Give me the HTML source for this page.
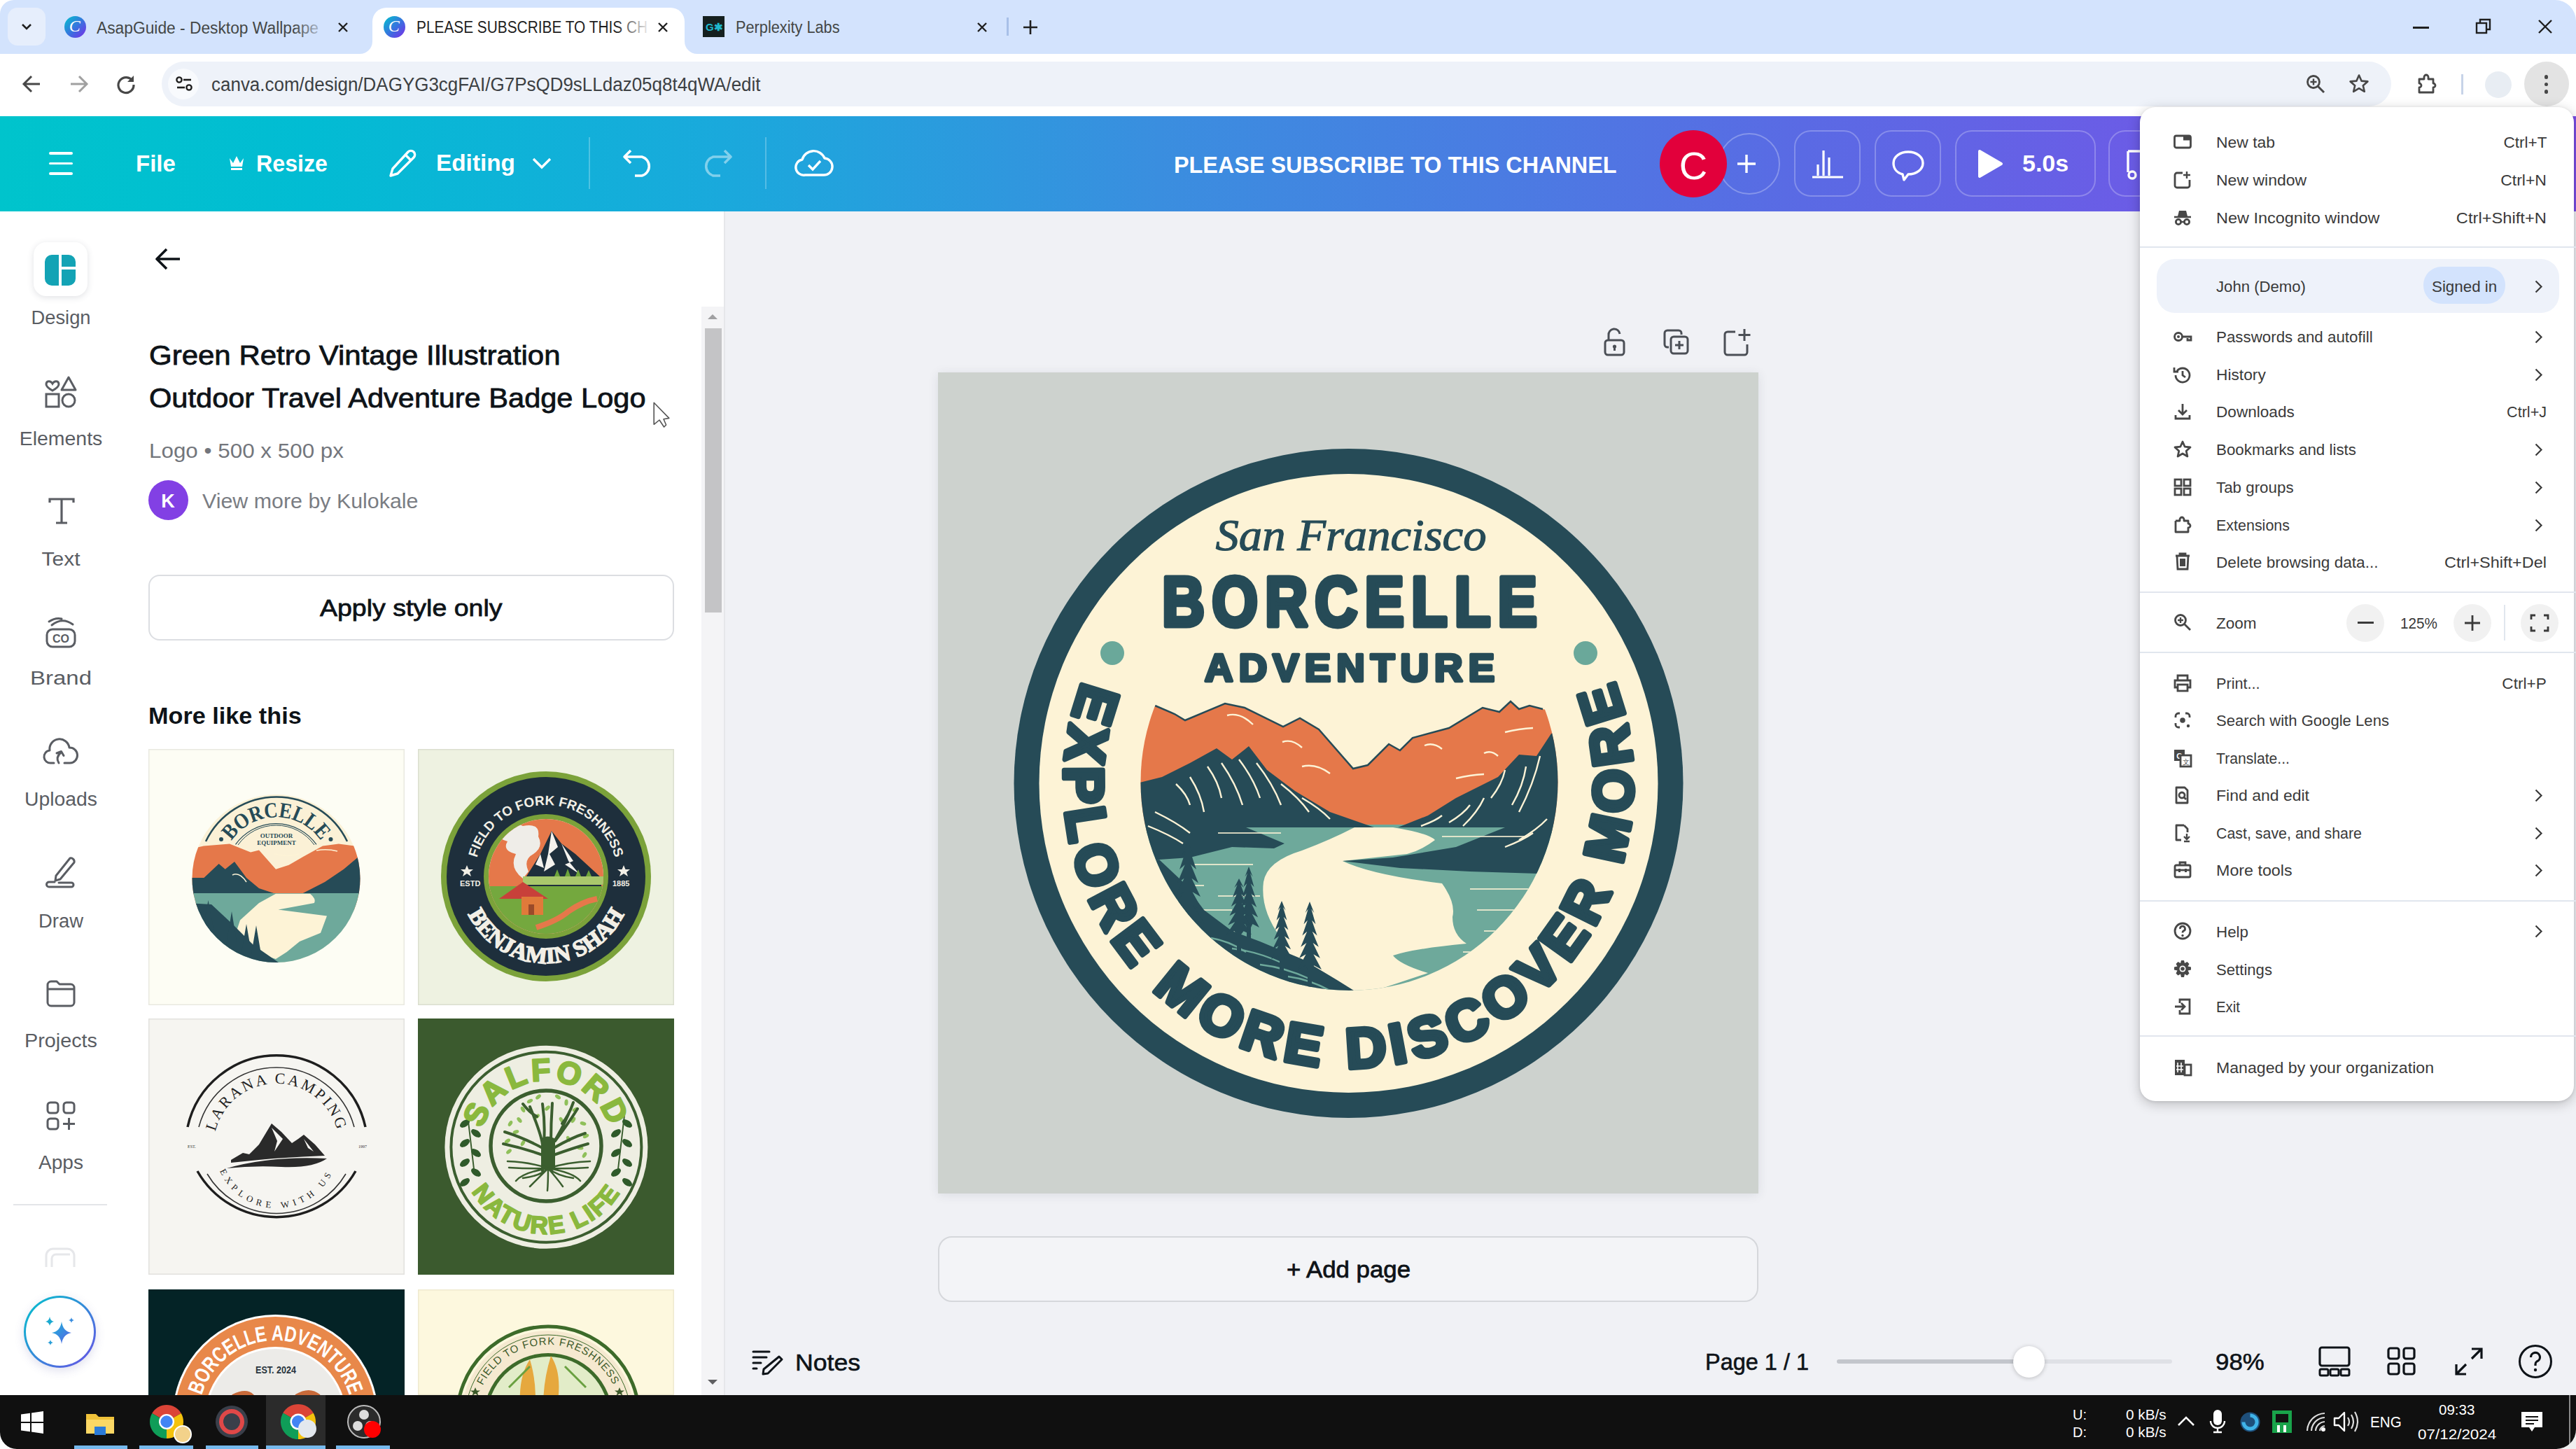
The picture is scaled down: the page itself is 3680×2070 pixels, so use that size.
<!DOCTYPE html>
<html><head><meta charset="utf-8"><style>
html,body{margin:0;padding:0;}
body{width:3680px;height:2070px;position:relative;overflow:hidden;background:#fff;font-family:'Liberation Sans', sans-serif;}
svg{overflow:visible}
</style></head><body>
<div style="position:absolute;left:0px;top:0px;width:3680px;height:77px;background:#d3e3fd;"></div>
<div style="position:absolute;left:11px;top:11px;width:54px;height:54px;background:#e6eefc;border-radius:14px;"></div>
<svg style="position:absolute;left:26px;top:26px;" width="24" height="24" viewBox="0 0 24 24"><path d="M6 9 L12 15 L18 9" fill="none" stroke="#1f1f1f" stroke-width="2.6"/></svg>
<div style="position:absolute;left:532px;top:11px;width:446px;height:66px;background:#fff;border-radius:20px 20px 0 0;"></div>
<svg style="position:absolute;left:514px;top:59px" width="18" height="18"><path d="M0 18 A18 18 0 0 0 18 0 L18 18Z" fill="#fff"/></svg>
<svg style="position:absolute;left:978px;top:59px" width="18" height="18"><path d="M18 18 A18 18 0 0 1 0 0 L0 18Z" fill="#fff"/></svg>
<svg style="position:absolute;left:92.0px;top:23.0px;" width="31.0" height="31.0" viewBox="0 0 31.0 31.0"><defs><linearGradient id="cg107" x1="0" y1="0" x2="1" y2="1"><stop offset="0" stop-color="#00c4cc"/><stop offset="0.55" stop-color="#3b6fe0"/><stop offset="1" stop-color="#7d2ae8"/></linearGradient></defs><circle cx="15.5" cy="15.5" r="15.5" fill="url(#cg107)"/><text x="14.725" y="22.474999999999998" text-anchor="middle" font-family="Liberation Serif" font-style="italic" font-size="24.025000000000002" fill="#fff">C</text></svg>
<div style="position:absolute;left:138.0px;top:39.5px;line-height:0;white-space:pre;font-family:'Liberation Sans', sans-serif;font-size:23px;font-weight:400;font-style:normal;color:#444746;letter-spacing:0px;transform:scaleX(0.9905);transform-origin:left 0;">AsapGuide - Desktop Wallpape</div>
<div style="position:absolute;left:420px;top:20px;width:50px;height:40px;background:linear-gradient(90deg,rgba(211,227,253,0),#d3e3fd);"></div>
<svg style="position:absolute;left:482px;top:31px;" width="16" height="16" viewBox="0 0 16 16"><path d="M2 2L14 14M14 2L2 14" stroke="#1f1f1f" stroke-width="2.4"/></svg>
<svg style="position:absolute;left:547.8px;top:23.0px;" width="31.0" height="31.0" viewBox="0 0 31.0 31.0"><defs><linearGradient id="cg563" x1="0" y1="0" x2="1" y2="1"><stop offset="0" stop-color="#00c4cc"/><stop offset="0.55" stop-color="#3b6fe0"/><stop offset="1" stop-color="#7d2ae8"/></linearGradient></defs><circle cx="15.5" cy="15.5" r="15.5" fill="url(#cg563)"/><text x="14.725" y="22.474999999999998" text-anchor="middle" font-family="Liberation Serif" font-style="italic" font-size="24.025000000000002" fill="#fff">C</text></svg>
<div style="position:absolute;left:595.0px;top:39.4px;line-height:0;white-space:pre;font-family:'Liberation Sans', sans-serif;font-size:23px;font-weight:400;font-style:normal;color:#1f1f1f;letter-spacing:0px;transform:scaleX(0.9059);transform-origin:left 0;">PLEASE SUBSCRIBE TO THIS CH</div>
<div style="position:absolute;left:880px;top:20px;width:50px;height:40px;background:linear-gradient(90deg,rgba(255,255,255,0),#fff);"></div>
<svg style="position:absolute;left:938.5px;top:31px;" width="16" height="16" viewBox="0 0 16 16"><path d="M2 2L14 14M14 2L2 14" stroke="#1f1f1f" stroke-width="2.4"/></svg>
<div style="position:absolute;left:1004px;top:23px;width:31px;height:30px;background:#15201f;"></div>
<div style="position:absolute;left:1008.0px;top:38.8px;line-height:0;white-space:pre;font-family:'Liberation Sans', sans-serif;font-size:15px;font-weight:700;font-style:normal;color:#1fb8cd;letter-spacing:0px;">G✱</div>
<div style="position:absolute;left:1051.0px;top:39.4px;line-height:0;white-space:pre;font-family:'Liberation Sans', sans-serif;font-size:23px;font-weight:400;font-style:normal;color:#444746;letter-spacing:0px;transform:scaleX(0.9444);transform-origin:left 0;">Perplexity Labs</div>
<svg style="position:absolute;left:1394.5px;top:31px;" width="16" height="16" viewBox="0 0 16 16"><path d="M2 2L14 14M14 2L2 14" stroke="#1f1f1f" stroke-width="2.4"/></svg>
<div style="position:absolute;left:1438px;top:25px;width:3px;height:26px;background:#a8c0e8;"></div>
<svg style="position:absolute;left:1461px;top:28px;" width="22" height="22" viewBox="0 0 22 22"><path d="M11 1V21M1 11H21" stroke="#1f1f1f" stroke-width="2.6"/></svg>
<div style="position:absolute;left:3447px;top:38px;width:23px;height:2.5px;background:#1f1f1f;"></div>
<svg style="position:absolute;left:3536px;top:26px;" width="24" height="24" viewBox="0 0 24 24"><rect x="2" y="7" width="14" height="14" fill="none" stroke="#1f1f1f" stroke-width="2.4"/><path d="M7 7V2H21V16H16" fill="none" stroke="#1f1f1f" stroke-width="2.4"/></svg>
<svg style="position:absolute;left:3626px;top:28px;" width="20" height="20" viewBox="0 0 20 20"><path d="M1 1L19 19M19 1L1 19" stroke="#1f1f1f" stroke-width="2.4"/></svg>
<div style="position:absolute;left:0px;top:77px;width:3680px;height:89px;background:#fff;"></div>
<svg style="position:absolute;left:31px;top:106px;" width="28" height="28" viewBox="0 0 28 28"><path d="M26 14H4M14 3L3 14L14 25" fill="none" stroke="#474747" stroke-width="3"/></svg>
<svg style="position:absolute;left:99px;top:106px;" width="28" height="28" viewBox="0 0 28 28"><path d="M2 14H24M14 3L25 14L14 25" fill="none" stroke="#a0a0a0" stroke-width="3"/></svg>
<svg style="position:absolute;left:166px;top:106px;" width="28" height="28" viewBox="0 0 28 28"><path d="M23.5 10 A11 11 0 1 0 25 15" fill="none" stroke="#474747" stroke-width="3.2"/><path d="M25 2V11H16Z" fill="#474747"/></svg>
<div style="position:absolute;left:231px;top:88px;width:3185px;height:64px;background:#eef2f9;border-radius:32px;"></div>
<div style="position:absolute;left:240px;top:98px;width:44px;height:44px;border-radius:22px;background:#f8fafd;"></div>
<svg style="position:absolute;left:251px;top:109px;" width="24" height="22" viewBox="0 0 24 22"><circle cx="5" cy="5" r="3.6" fill="none" stroke="#1f1f1f" stroke-width="2.4"/><path d="M11 5H22" stroke="#1f1f1f" stroke-width="2.6"/><path d="M2 16H13" stroke="#1f1f1f" stroke-width="2.6"/><circle cx="19" cy="16" r="3.6" fill="none" stroke="#1f1f1f" stroke-width="2.4"/></svg>
<div style="position:absolute;left:301.5px;top:120.6px;line-height:0;white-space:pre;font-family:'Liberation Sans', sans-serif;font-size:27px;font-weight:400;font-style:normal;color:#3c4043;letter-spacing:0px;transform:scaleX(0.9621);transform-origin:left 0;">canva.com/design/DAGYG3cgFAI/G7PsQD9sLLdaz05q8t4qWA/edit</div>
<svg style="position:absolute;left:3294px;top:106px;" width="28" height="28" viewBox="0 0 28 28"><circle cx="11" cy="11" r="8.5" fill="none" stroke="#474747" stroke-width="2.8"/><path d="M17 17L26 26" stroke="#474747" stroke-width="3"/><path d="M11 6.5V15.5M6.5 11H15.5" stroke="#474747" stroke-width="2.4"/></svg>
<svg style="position:absolute;left:3355px;top:105px;" width="30" height="30" viewBox="0 0 30 30"><path d="M15 2.5L18.6 10.6L27.4 11.4L20.8 17.2L22.8 25.8L15 21.2L7.2 25.8L9.2 17.2L2.6 11.4L11.4 10.6Z" fill="none" stroke="#474747" stroke-width="2.6" stroke-linejoin="round"/></svg>
<svg style="position:absolute;left:3452px;top:104px;" width="32" height="32" viewBox="0 0 32 32"><path d="M4 9H11V6A3 3 0 0 1 17 6V9H24V15A3 3 0 0 1 24 21V28H4V21A3 3 0 0 0 4 15Z" fill="none" stroke="#474747" stroke-width="2.8" stroke-linejoin="round"/></svg>
<div style="position:absolute;left:3516px;top:106px;width:3px;height:29px;background:#c7d3e8;"></div>
<div style="position:absolute;left:3550px;top:102px;width:38px;height:38px;border-radius:19px;background:#e8edf3;"></div>
<div style="position:absolute;left:3605.5px;top:88px;width:64px;height:64px;border-radius:32px;background:#e3e3e3;"></div>
<div style="position:absolute;left:3634.7px;top:107.2px;width:5.6px;height:5.6px;border-radius:3px;background:#474747;"></div>
<div style="position:absolute;left:3634.7px;top:117.7px;width:5.6px;height:5.6px;border-radius:3px;background:#474747;"></div>
<div style="position:absolute;left:3634.7px;top:128.2px;width:5.6px;height:5.6px;border-radius:3px;background:#474747;"></div>
<div style="position:absolute;left:0px;top:166px;width:3680px;height:136px;background:linear-gradient(90deg,#00c4cc 0%,#02bcd3 12%,#1aa9dc 28%,#3a8edf 45%,#4a7ce2 58%,#5a6ae4 70%,#6b5ce6 83%,#7a4fe8 100%);"></div>
<div style="position:absolute;left:69.5px;top:217.2px;width:34.0px;height:3.6000000000000227px;background:#fff;border-radius:2px;"></div>
<div style="position:absolute;left:69.5px;top:231.7px;width:34.0px;height:3.6000000000000227px;background:#fff;border-radius:2px;"></div>
<div style="position:absolute;left:69.5px;top:246.2px;width:34.0px;height:3.6000000000000227px;background:#fff;border-radius:2px;"></div>
<div style="position:absolute;left:194.0px;top:233.6px;line-height:0;white-space:pre;font-family:'Liberation Sans', sans-serif;font-size:33px;font-weight:700;font-style:normal;color:#fff;letter-spacing:0px;">File</div>
<svg style="position:absolute;left:326px;top:220px;" width="24" height="24" viewBox="0 0 24 24"><path d="M2 6L7 13L12 3L17 13L22 6L20 18H4Z" fill="#fff"/><rect x="4" y="20" width="16" height="3" fill="#fff"/></svg>
<div style="position:absolute;left:365.7px;top:233.6px;line-height:0;white-space:pre;font-family:'Liberation Sans', sans-serif;font-size:33px;font-weight:700;font-style:normal;color:#fff;letter-spacing:0px;transform:scaleX(0.9755);transform-origin:left 0;">Resize</div>
<svg style="position:absolute;left:553px;top:211px;" width="44" height="44" viewBox="0 0 44 44"><path d="M30 6A5.5 5.5 0 0 1 38 14L15 37L5 40L8 30Z M26 10L34 18" fill="none" stroke="#fff" stroke-width="3.4" stroke-linejoin="round" stroke-linecap="round"/></svg>
<div style="position:absolute;left:623.0px;top:233.1px;line-height:0;white-space:pre;font-family:'Liberation Sans', sans-serif;font-size:33px;font-weight:700;font-style:normal;color:#fff;letter-spacing:0px;transform:scaleX(1.0106);transform-origin:left 0;">Editing</div>
<svg style="position:absolute;left:760px;top:224px;" width="28" height="18" viewBox="0 0 28 18"><path d="M2 3L14 15L26 3" fill="none" stroke="#fff" stroke-width="3.4"/></svg>
<div style="position:absolute;left:841px;top:196px;width:2px;height:74px;background:rgba(255,255,255,0.25);"></div>
<svg style="position:absolute;left:889px;top:213px;" width="46" height="40" viewBox="0 0 46 40"><path d="M12 2L3 11L12 20M3 11H28A14 14 0 0 1 28 38H18" fill="none" stroke="#fff" stroke-width="3.6" stroke-linejoin="round"/></svg>
<svg style="position:absolute;left:1001px;top:213px;" width="46" height="40" viewBox="0 0 46 40"><path d="M34 2L43 11L34 20M43 11H18A14 14 0 0 0 18 38H28" fill="none" stroke="rgba(255,255,255,0.45)" stroke-width="3.6" stroke-linejoin="round"/></svg>
<div style="position:absolute;left:1092.5px;top:196px;width:2.0px;height:74px;background:rgba(255,255,255,0.25);"></div>
<svg style="position:absolute;left:1136px;top:212px;" width="54" height="42" viewBox="0 0 54 42"><path d="M14 38H40A12 12 0 0 0 42 14A17 17 0 0 0 10 16A11 11 0 0 0 14 38Z" fill="none" stroke="#fff" stroke-width="3.4" stroke-linejoin="round"/><path d="M19 24L25 30L36 18" fill="none" stroke="#fff" stroke-width="3.4"/></svg>
<div style="position:absolute;left:1676.6px;top:235.2px;line-height:0;white-space:pre;font-family:'Liberation Sans', sans-serif;font-size:34px;font-weight:700;font-style:normal;color:#fff;letter-spacing:0px;transform:scaleX(0.9521);transform-origin:left 0;">PLEASE SUBSCRIBE TO THIS CHANNEL</div>
<div style="position:absolute;left:2455px;top:189.5px;width:88px;height:88px;border-radius:50%;box-sizing:border-box;border:2px solid rgba(255,255,255,0.28);"></div>
<div style="position:absolute;left:2371px;top:185.5px;width:96px;height:96px;border-radius:50%;background:#e2003b;"></div>
<div style="position:absolute;left:2419.0px;top:236.6px;line-height:0;white-space:pre;font-family:'Liberation Sans', sans-serif;font-size:56px;font-weight:400;font-style:normal;color:#fff;letter-spacing:0px;transform:translateX(-50%) scaleX(1.0000);transform-origin:center 0;">C</div>
<svg style="position:absolute;left:2481px;top:219.5px;" width="28" height="28" viewBox="0 0 28 28"><path d="M14 1V27M1 14H27" stroke="#fff" stroke-width="3.4"/></svg>
<div style="position:absolute;left:2563px;top:186px;width:95px;height:95px;border-radius:24px;box-sizing:border-box;border:2px solid rgba(255,255,255,0.25);"></div>
<div style="position:absolute;left:2678px;top:186px;width:95px;height:95px;border-radius:24px;box-sizing:border-box;border:2px solid rgba(255,255,255,0.25);"></div>
<div style="position:absolute;left:2793px;top:186px;width:201px;height:95px;border-radius:24px;box-sizing:border-box;border:2px solid rgba(255,255,255,0.25);"></div>
<div style="position:absolute;left:3012px;top:186px;width:98px;height:95px;border-radius:24px;box-sizing:border-box;border:2px solid rgba(255,255,255,0.25);"></div>
<svg style="position:absolute;left:2586px;top:212px;" width="50" height="44" viewBox="0 0 50 44"><path d="M3 41H47M11 39V23M19 39V3M27 39V13" fill="none" stroke="#fff" stroke-width="3.2"/></svg>
<svg style="position:absolute;left:2701px;top:213px;" width="50" height="46" viewBox="0 0 50 46"><path d="M25 4C37 4 46 11 46 20C46 29 37 36 25 36L19 44L17 36C9 34 4 28 4 20C4 11 13 4 25 4Z" fill="none" stroke="#fff" stroke-width="3.4" stroke-linejoin="round"/></svg>
<svg style="position:absolute;left:2824px;top:213px;" width="38" height="42" viewBox="0 0 38 42"><path d="M4 3L35 21L4 39Z" fill="#fff" stroke="#fff" stroke-width="4" stroke-linejoin="round"/></svg>
<div style="position:absolute;left:2889.0px;top:232.7px;line-height:0;white-space:pre;font-family:'Liberation Sans', sans-serif;font-size:34px;font-weight:700;font-style:normal;color:#fff;letter-spacing:0px;">5.0s</div>
<svg style="position:absolute;left:3036px;top:212px;" width="40" height="46" viewBox="0 0 40 46"><path d="M4 4H24V38M4 4V34" fill="none" stroke="#fff" stroke-width="3.4"/><circle cx="10" cy="38" r="5" fill="none" stroke="#fff" stroke-width="3.4"/></svg>
<div style="position:absolute;left:0px;top:302px;width:1034px;height:1691px;background:#fff;"></div>
<div style="position:absolute;left:47.5px;top:346px;width:77px;height:77px;border-radius:18px;background:#fff;box-shadow:0 2px 10px rgba(60,70,90,0.16);"></div>
<svg style="position:absolute;left:64px;top:364px;" width="44" height="44" viewBox="0 0 44 44"><path d="M10 0H20V44H10A10 10 0 0 1 0 34V10A10 10 0 0 1 10 0Z" fill="#13a3b5"/><path d="M24 0H34A10 10 0 0 1 44 10V17H24Z" fill="#13a3b5"/><path d="M24 21H44V34A10 10 0 0 1 34 44H24Z" fill="#13a3b5"/></svg>
<div style="position:absolute;left:86.5px;top:454.1px;line-height:0;white-space:pre;font-family:'Liberation Sans', sans-serif;font-size:27px;font-weight:400;font-style:normal;color:#5a5d63;letter-spacing:0px;transform:translateX(-50%) scaleX(1.0113);transform-origin:center 0;">Design</div>
<div style="position:absolute;left:86.5px;top:626.6px;line-height:0;white-space:pre;font-family:'Liberation Sans', sans-serif;font-size:27px;font-weight:400;font-style:normal;color:#5a5d63;letter-spacing:0px;transform:translateX(-50%) scaleX(1.0536);transform-origin:center 0;">Elements</div>
<div style="position:absolute;left:86.5px;top:798.9px;line-height:0;white-space:pre;font-family:'Liberation Sans', sans-serif;font-size:27px;font-weight:400;font-style:normal;color:#5a5d63;letter-spacing:0px;transform:translateX(-50%) scaleX(1.1104);transform-origin:center 0;">Text</div>
<div style="position:absolute;left:86.5px;top:969.4px;line-height:0;white-space:pre;font-family:'Liberation Sans', sans-serif;font-size:27px;font-weight:400;font-style:normal;color:#5a5d63;letter-spacing:0px;transform:translateX(-50%) scaleX(1.2212);transform-origin:center 0;">Brand</div>
<div style="position:absolute;left:86.5px;top:1142.2px;line-height:0;white-space:pre;font-family:'Liberation Sans', sans-serif;font-size:27px;font-weight:400;font-style:normal;color:#5a5d63;letter-spacing:0px;transform:translateX(-50%) scaleX(1.0498);transform-origin:center 0;">Uploads</div>
<div style="position:absolute;left:86.5px;top:1315.6px;line-height:0;white-space:pre;font-family:'Liberation Sans', sans-serif;font-size:27px;font-weight:400;font-style:normal;color:#5a5d63;letter-spacing:0px;transform:translateX(-50%) scaleX(1.0156);transform-origin:center 0;">Draw</div>
<div style="position:absolute;left:86.5px;top:1487.1px;line-height:0;white-space:pre;font-family:'Liberation Sans', sans-serif;font-size:27px;font-weight:400;font-style:normal;color:#5a5d63;letter-spacing:0px;transform:translateX(-50%) scaleX(1.0662);transform-origin:center 0;">Projects</div>
<div style="position:absolute;left:86.5px;top:1660.5px;line-height:0;white-space:pre;font-family:'Liberation Sans', sans-serif;font-size:27px;font-weight:400;font-style:normal;color:#5a5d63;letter-spacing:0px;transform:translateX(-50%) scaleX(1.0399);transform-origin:center 0;">Apps</div>
<svg style="position:absolute;left:64px;top:537px;" width="46" height="46" viewBox="0 0 46 46"><path d="M11 11 C8 6 2 7 2 12 C2 16 11 21 11 21 C11 21 20 16 20 12 C20 7 14 6 11 11Z" fill="none" stroke="#5a5d63" stroke-width="3"/><path d="M34 2L44 20H24Z" fill="none" stroke="#5a5d63" stroke-width="3" stroke-linejoin="round"/><rect x="2" y="26" width="18" height="18" fill="none" stroke="#5a5d63" stroke-width="3"/><circle cx="34" cy="35" r="9" fill="none" stroke="#5a5d63" stroke-width="3"/></svg>
<svg style="position:absolute;left:68px;top:710px;" width="40" height="40" viewBox="0 0 40 40"><path d="M3 8V3H37V8M20 3V37M12 37H28" fill="none" stroke="#5a5d63" stroke-width="3.2"/></svg>
<svg style="position:absolute;left:64px;top:880px;" width="46" height="46" viewBox="0 0 46 46"><rect x="3" y="19" width="40" height="25" rx="8" fill="none" stroke="#5a5d63" stroke-width="3"/><path d="M10 13Q25 1 40 12M6 8Q15 2 24 4" fill="none" stroke="#5a5d63" stroke-width="3" stroke-linecap="round"/><text x="23" y="38" text-anchor="middle" font-family="Liberation Sans" font-weight="700" font-size="16" fill="#5a5d63">CO</text></svg>
<svg style="position:absolute;left:62px;top:1052px;" width="50" height="42" viewBox="0 0 50 42"><path d="M15 38H11A9 9 0 0 1 9 20A14 14 0 0 1 37 16A10.5 10.5 0 0 1 38 38H30" fill="none" stroke="#5a5d63" stroke-width="3" stroke-linecap="round" stroke-linejoin="round"/><path d="M22 38Q17 30 25 23M19 24L25.5 21.5L29 27.5" fill="none" stroke="#5a5d63" stroke-width="3" stroke-linecap="round" stroke-linejoin="round"/></svg>
<svg style="position:absolute;left:64px;top:1223px;" width="46" height="46" viewBox="0 0 46 46"><path d="M36 3A5 5 0 0 1 42 9L22 33L15 35L16 28Z" fill="none" stroke="#5a5d63" stroke-width="3" stroke-linejoin="round"/><path d="M16 34H5A3.5 3.5 0 0 0 5 41H40A3.5 3.5 0 0 1 40 48" fill="none" stroke="#5a5d63" stroke-width="0"/><path d="M14 37H6A3.5 3.5 0 0 0 6 44H38A3 3 0 0 0 38 38H20" fill="none" stroke="#5a5d63" stroke-width="3" stroke-linecap="round"/></svg>
<svg style="position:absolute;left:65px;top:1398px;" width="44" height="42" viewBox="0 0 44 42"><path d="M3 9A5 5 0 0 1 8 4H16L20 8H36A5 5 0 0 1 41 13V34A5 5 0 0 1 36 39H8A5 5 0 0 1 3 34Z M3 15H41" fill="none" stroke="#5a5d63" stroke-width="3" stroke-linejoin="round"/></svg>
<svg style="position:absolute;left:65px;top:1572px;" width="44" height="44" viewBox="0 0 44 44"><rect x="3" y="3" width="15" height="15" rx="4" fill="none" stroke="#5a5d63" stroke-width="3"/><rect x="26" y="3" width="15" height="15" rx="4" fill="none" stroke="#5a5d63" stroke-width="3"/><rect x="3" y="26" width="15" height="15" rx="4" fill="none" stroke="#5a5d63" stroke-width="3"/><path d="M33.5 25V42M25 33.5H42" stroke="#5a5d63" stroke-width="3"/></svg>
<div style="position:absolute;left:19px;top:1720px;width:134px;height:2px;background:#e3e5e8;"></div>
<svg style="position:absolute;left:60px;top:1780px;" width="52" height="32" viewBox="0 0 52 32"><path d="M6 30V14A10 10 0 0 1 16 4H36A10 10 0 0 1 46 14V30M14 30V18A6 6 0 0 1 20 12H40" fill="none" stroke="#e6e7ea" stroke-width="3"/></svg>
<div style="position:absolute;left:34px;top:1851px;width:103px;height:103px;border-radius:50%;background:linear-gradient(135deg,#00c4cc,#6b4fe6);box-shadow:0 4px 14px rgba(80,80,160,0.18);"></div>
<div style="position:absolute;left:37px;top:1854px;width:97px;height:97px;border-radius:50%;background:#fff;"></div>
<svg style="position:absolute;left:60px;top:1878px;" width="52" height="50" viewBox="0 0 52 50"><defs><linearGradient id="sg" x1="0" y1="0" x2="1" y2="1"><stop offset="0" stop-color="#19b6d6"/><stop offset="1" stop-color="#5d5fe8"/></linearGradient></defs><path d="M28 10Q30 24 42 26Q30 28 28 42Q26 28 14 26Q26 24 28 10Z" fill="url(#sg)"/><path d="M11 3Q12 9 17 10Q12 11 11 16Q10 11 5 10Q10 9 11 3Z" fill="#1aa9d0"/><path d="M42 4Q42.6 7.5 46 8Q42.6 8.5 42 12Q41.4 8.5 38 8Q41.4 7.5 42 4Z" fill="#3b8ee0"/><path d="M12 36Q12.6 39.5 16 40Q12.6 40.5 12 44Q11.4 40.5 8 40Q11.4 39.5 12 36Z" fill="#2a9fd8"/></svg>
<svg style="position:absolute;left:222px;top:354px;" width="36" height="32" viewBox="0 0 36 32"><path d="M16 2L2 16L16 30M2 16H35" fill="none" stroke="#0e1318" stroke-width="3.6" stroke-linejoin="round"/></svg>
<div style="position:absolute;left:212.5px;top:507.6px;line-height:0;white-space:pre;font-family:'Liberation Sans', sans-serif;font-size:38px;font-weight:400;font-style:normal;color:#0e1318;letter-spacing:0px;transform:scaleX(1.1052);transform-origin:left 0;-webkit-text-stroke:0.8px #0e1318;">Green Retro Vintage Illustration</div>
<div style="position:absolute;left:212.5px;top:568.8px;line-height:0;white-space:pre;font-family:'Liberation Sans', sans-serif;font-size:38px;font-weight:400;font-style:normal;color:#0e1318;letter-spacing:0px;transform:scaleX(1.0940);transform-origin:left 0;-webkit-text-stroke:0.8px #0e1318;">Outdoor Travel Adventure Badge Logo</div>
<div style="position:absolute;left:212.5px;top:644.0px;line-height:0;white-space:pre;font-family:'Liberation Sans', sans-serif;font-size:29px;font-weight:400;font-style:normal;color:#73767c;letter-spacing:0px;transform:scaleX(1.0823);transform-origin:left 0;">Logo • 500 x 500 px</div>
<div style="position:absolute;left:211.5px;top:686px;width:57px;height:57px;border-radius:50%;background:#8240e4;"></div>
<div style="position:absolute;left:240.0px;top:715.6px;line-height:0;white-space:pre;font-family:'Liberation Sans', sans-serif;font-size:27px;font-weight:700;font-style:normal;color:#fff;letter-spacing:0px;transform:translateX(-50%) scaleX(1.0000);transform-origin:center 0;">K</div>
<div style="position:absolute;left:288.5px;top:716.4px;line-height:0;white-space:pre;font-family:'Liberation Sans', sans-serif;font-size:29px;font-weight:400;font-style:normal;color:#7a7d83;letter-spacing:0px;transform:scaleX(1.0477);transform-origin:left 0;">View more by Kulokale</div>
<div style="position:absolute;left:211.5px;top:821px;width:751.5px;height:94px;border-radius:16px;box-sizing:border-box;border:2px solid #dcdee2;background:#fff;"></div>
<div style="position:absolute;left:457.0px;top:868.2px;line-height:0;white-space:pre;font-family:'Liberation Sans', sans-serif;font-size:34px;font-weight:400;font-style:normal;color:#0e1318;letter-spacing:0px;transform:scaleX(1.1027);transform-origin:left 0;-webkit-text-stroke:0.8px #0e1318;">Apply style only</div>
<div style="position:absolute;left:212.0px;top:1022.2px;line-height:0;white-space:pre;font-family:'Liberation Sans', sans-serif;font-size:34px;font-weight:700;font-style:normal;color:#0e1318;letter-spacing:0px;transform:scaleX(1.0065);transform-origin:left 0;">More like this</div>
<div style="position:absolute;left:1002px;top:438px;width:32px;height:1555px;background:#f4f4f6;"></div>
<div style="position:absolute;left:1007px;top:469px;width:24px;height:406px;background:#c4c4c6;"></div>
<svg style="position:absolute;left:1010px;top:447px;" width="16" height="10" viewBox="0 0 16 10"><path d="M1 9L8 2L15 9Z" fill="#a0a0a2"/></svg>
<svg style="position:absolute;left:1010px;top:1970px;" width="16" height="10" viewBox="0 0 16 10"><path d="M1 1L8 8L15 1Z" fill="#606062"/></svg>
<div style="position:absolute;left:1034px;top:302px;width:2646px;height:1691px;background:#f0f1f5;"></div>
<div style="position:absolute;left:1034px;top:302px;width:2px;height:1691px;background:#e6e7ea;"></div>
<svg style="position:absolute;left:2291px;top:468px;" width="32" height="42" viewBox="0 0 32 42"><path d="M7 18V11A8 8 0 0 1 23 9" fill="none" stroke="#4b4f56" stroke-width="3"/><rect x="2" y="18" width="27" height="21" rx="4" fill="none" stroke="#4b4f56" stroke-width="3"/><circle cx="15.5" cy="27" r="2.6" fill="#4b4f56"/><path d="M15.5 28V33" stroke="#4b4f56" stroke-width="3"/></svg>
<svg style="position:absolute;left:2376px;top:470px;" width="38" height="38" viewBox="0 0 38 38"><path d="M8 26H6A4 4 0 0 1 2 22V6A4 4 0 0 1 6 2H22A4 4 0 0 1 26 6V8" fill="none" stroke="#4b4f56" stroke-width="3"/><rect x="11" y="11" width="24" height="24" rx="4" fill="none" stroke="#4b4f56" stroke-width="3"/><path d="M23 17V29M17 23H29" stroke="#4b4f56" stroke-width="3"/></svg>
<svg style="position:absolute;left:2461px;top:468px;" width="40" height="42" viewBox="0 0 40 42"><path d="M18 6H7A4 4 0 0 0 3 10V35A4 4 0 0 0 7 39H31A4 4 0 0 0 35 35V24" fill="none" stroke="#4b4f56" stroke-width="3"/><path d="M31 2V19M22.5 10.5H39.5" stroke="#4b4f56" stroke-width="3"/></svg>
<div style="position:absolute;left:1340px;top:532px;width:1172px;height:1173px;background:#cdd2ce;box-shadow:0 2px 14px rgba(40,50,70,0.10);"></div>
<svg style="position:absolute;left:0;top:0" width="3680" height="2070" viewBox="0 0 3680 2070"><circle cx="1926.5" cy="1119" r="478" fill="#264b57"/><circle cx="1926.5" cy="1119" r="442" fill="#fdf3d6"/><circle cx="1589" cy="933" r="17" fill="#6aa89a"/><circle cx="2265" cy="933" r="17" fill="#6aa89a"/><defs><clipPath id="ill"><circle cx="1927.5" cy="1117" r="298"/></clipPath></defs><g clip-path="url(#ill)"><path d="M1620 1130 L1625 1010 L1650 1008 L1678 1020 L1693 1029 L1750 1005 L1778 1011 L1833 1038 L1857 1026 L1884 1042 L1933 1098 L1954 1093 L1984 1063 L2000 1072 L2018 1054 L2070 1040 L2118 1011 L2142 1017 L2158 1002 L2170 1013 L2185 1008 L2204 1013 L2240 1020 L2240 1190 L1620 1190 Z" fill="#e5784a"/><path d="M1650 1008 L1678 1020 L1693 1029 L1750 1005 L1778 1011 L1833 1038 L1857 1026 L1884 1042 L1933 1098 L1954 1093 L1984 1063 L2000 1072 L2018 1054 L2070 1040 L2118 1011 L2142 1017 L2158 1002 L2170 1013 L2185 1008 L2204 1013" fill="none" stroke="#264b57" stroke-width="2.5"/><rect x="1620" y="1178" width="620" height="260" fill="#6ea99b"/><path d="M1935 1182 L1990 1182 Q2040 1190 2050 1200 Q2030 1215 2010 1220 L1918 1230 Q1960 1250 2060 1262 Q2080 1290 2075 1310 Q2075 1335 2095 1348 Q2020 1355 1990 1365 Q2000 1378 2040 1390 L1950 1420 L1870 1420 Q1840 1380 1830 1340 Q1800 1300 1805 1260 Q1810 1230 1860 1215 Q1900 1200 1935 1182Z" fill="#fdf3d6"/><path d="M1620 1120 L1660 1110 L1700 1090 L1738 1069 L1760 1085 L1784 1066 L1810 1100 L1850 1130 L1900 1160 L1963 1182 L1780 1182 L1835 1205 L1820 1212 L1760 1210 L1700 1225 L1656 1228 L1620 1240Z" fill="#264b57"/><path d="M2240 1040 L2216 1048 L2195 1080 L2170 1078 L2140 1110 L2080 1140 L2040 1165 L1997 1182 L2150 1182 L2080 1210 L1990 1225 L1918 1230 L2000 1240 L2100 1245 L2197 1248 L2240 1250Z" fill="#264b57"/><path d="M1725 1095 Q1741.0 1117.5 1745 1140" fill="none" stroke="#fdf3d6" stroke-width="2.4"/><path d="M1745 1090 Q1766.0 1120.0 1775 1150" fill="none" stroke="#fdf3d6" stroke-width="2.4"/><path d="M1770 1085 Q1791.0 1112.5 1800 1140" fill="none" stroke="#fdf3d6" stroke-width="2.4"/><path d="M1795 1090 Q1818.5 1120.0 1830 1150" fill="none" stroke="#fdf3d6" stroke-width="2.4"/><path d="M1680 1120 Q1696.0 1135.0 1700 1150" fill="none" stroke="#fdf3d6" stroke-width="2.4"/><path d="M1700 1110 Q1716.0 1135.0 1720 1160" fill="none" stroke="#fdf3d6" stroke-width="2.4"/><path d="M1830 1120 Q1856.0 1140.0 1870 1160" fill="none" stroke="#fdf3d6" stroke-width="2.4"/><path d="M1860 1140 Q1886.0 1155.0 1900 1170" fill="none" stroke="#fdf3d6" stroke-width="2.4"/><path d="M2150 1100 Q2146.0 1120.0 2130 1140" fill="none" stroke="#fdf3d6" stroke-width="2.4"/><path d="M2180 1095 Q2176.0 1122.5 2160 1150" fill="none" stroke="#fdf3d6" stroke-width="2.4"/><path d="M2200 1080 Q2191.0 1120.0 2170 1160" fill="none" stroke="#fdf3d6" stroke-width="2.4"/><path d="M2100 1150 Q2091.0 1162.5 2070 1175" fill="none" stroke="#fdf3d6" stroke-width="2.4"/><path d="M2120 1140 Q2111.0 1160.0 2090 1180" fill="none" stroke="#fdf3d6" stroke-width="2.4"/><path d="M2060 1165 Q2051.0 1172.5 2030 1180" fill="none" stroke="#fdf3d6" stroke-width="2.4"/><path d="M1650 1160 Q1681.0 1175.0 1700 1190" fill="none" stroke="#fdf3d6" stroke-width="2.4"/><path d="M1640 1180 Q1671.0 1192.5 1690 1205" fill="none" stroke="#fdf3d6" stroke-width="2.4"/><path d="M2190 1190 Q2176.0 1200.0 2150 1210" fill="none" stroke="#fdf3d6" stroke-width="2.4"/><path d="M2210 1170 Q2196.0 1185.0 2170 1200" fill="none" stroke="#fdf3d6" stroke-width="2.4"/><path d="M1753 1022 Q1771.5 1017 1790 1035" fill="none" stroke="#fdf3d6" stroke-width="2.4"/><path d="M1832 1060 Q1846.0 1055 1860 1068" fill="none" stroke="#fdf3d6" stroke-width="2.4"/><path d="M1860 1095 Q1880.0 1090 1900 1105" fill="none" stroke="#fdf3d6" stroke-width="2.4"/><path d="M2150 1046 Q2170.0 1041 2190 1040" fill="none" stroke="#fdf3d6" stroke-width="2.4"/><path d="M2035 1065 Q2047.5 1060 2060 1070" fill="none" stroke="#fdf3d6" stroke-width="2.4"/><path d="M2080 1112 Q2100.0 1107 2120 1106" fill="none" stroke="#fdf3d6" stroke-width="2.4"/><path d="M2120 1076 Q2130.0 1071 2140 1080" fill="none" stroke="#fdf3d6" stroke-width="2.4"/><path d="M1700 1235 H1790" stroke="#fdf3d6" stroke-width="2" opacity="0.8"/><path d="M1660 1265 H1720" stroke="#fdf3d6" stroke-width="2" opacity="0.8"/><path d="M1740 1280 H1800" stroke="#fdf3d6" stroke-width="2" opacity="0.8"/><path d="M1680 1300 H1760" stroke="#fdf3d6" stroke-width="2" opacity="0.8"/><path d="M1700 1330 H1770" stroke="#fdf3d6" stroke-width="2" opacity="0.8"/><path d="M2100 1270 H2200" stroke="#fdf3d6" stroke-width="2" opacity="0.8"/><path d="M2110 1300 H2180" stroke="#fdf3d6" stroke-width="2" opacity="0.8"/><path d="M2120 1330 H2190" stroke="#fdf3d6" stroke-width="2" opacity="0.8"/><path d="M2090 1360 H2170" stroke="#fdf3d6" stroke-width="2" opacity="0.8"/><path d="M2060 1390 H2150" stroke="#fdf3d6" stroke-width="2" opacity="0.8"/><path d="M1900 1400 H1990" stroke="#fdf3d6" stroke-width="2" opacity="0.8"/><path d="M1840 1395 H1920" stroke="#fdf3d6" stroke-width="2" opacity="0.8"/><path d="M2060 1195 H2180" stroke="#fdf3d6" stroke-width="2" opacity="0.8"/><path d="M1740 1190 H1830" stroke="#fdf3d6" stroke-width="2" opacity="0.8"/><path d="M1620 1240 L1656 1228 L1690 1260 L1720 1300 L1760 1330 L1800 1345 L1860 1370 L1910 1400 L1950 1425 L1620 1425Z" fill="#264b57"/><path d="M1730 1340 Q1755.0 1344 1780 1360" fill="none" stroke="#6ea99b" stroke-width="2.4"/><path d="M1760 1355 Q1795.0 1359 1830 1375" fill="none" stroke="#6ea99b" stroke-width="2.4"/><path d="M1800 1378 Q1835.0 1382 1870 1398" fill="none" stroke="#6ea99b" stroke-width="2.4"/><path d="M1840 1395 Q1870.0 1399 1900 1415" fill="none" stroke="#6ea99b" stroke-width="2.4"/><path d="M1697 1203 L1706.0 1222.5 L1700.2 1215.7 L1709.0 1242.0 L1701.3 1235.2 L1712.0 1261.5 L1702.4 1254.7 L1715.0 1281.0 L1703.5 1274.2 L1718.0 1300.5 L1704.6 1293.7 L1721.0 1320.0 L1705.6 1313.2 L1700 1320 L1700 1345 L1694 1345 L1694 1320 L1688.4 1313.2 L1673.0 1320.0 L1689.4 1293.7 L1676.0 1300.5 L1690.5 1274.2 L1679.0 1281.0 L1691.6 1254.7 L1682.0 1261.5 L1692.7 1235.2 L1685.0 1242.0 L1693.8 1215.7 L1688.0 1222.5Z" fill="#264b57"/><path d="M1784 1238 L1789.6 1252.5 L1786.0 1247.4 L1791.5 1267.0 L1786.7 1261.9 L1793.4 1281.5 L1787.4 1276.4 L1795.2 1296.0 L1788.0 1290.9 L1797.1 1310.5 L1788.7 1305.4 L1799.0 1325.0 L1789.4 1319.9 L1787 1325 L1787 1350 L1781 1350 L1781 1325 L1778.6 1319.9 L1769.0 1325.0 L1779.3 1305.4 L1770.9 1310.5 L1780.0 1290.9 L1772.8 1296.0 L1780.6 1276.4 L1774.6 1281.5 L1781.3 1261.9 L1776.5 1267.0 L1782.0 1247.4 L1778.4 1252.5Z" fill="#264b57"/><path d="M1770 1255 L1776.8 1268.3 L1772.4 1263.7 L1779.0 1281.7 L1773.2 1277.0 L1781.2 1295.0 L1774.0 1290.3 L1783.5 1308.3 L1774.9 1303.7 L1785.8 1321.7 L1775.7 1317.0 L1788.0 1335.0 L1776.5 1330.3 L1773 1335 L1773 1360 L1767 1360 L1767 1335 L1763.5 1330.3 L1752.0 1335.0 L1764.3 1317.0 L1754.2 1321.7 L1765.1 1303.7 L1756.5 1308.3 L1766.0 1290.3 L1758.8 1295.0 L1766.8 1277.0 L1761.0 1281.7 L1767.6 1263.7 L1763.2 1268.3Z" fill="#264b57"/><path d="M1831 1287 L1836.6 1300.8 L1833.0 1296.0 L1838.5 1314.7 L1833.7 1309.8 L1840.4 1328.5 L1834.4 1323.7 L1842.2 1342.3 L1835.0 1337.5 L1844.1 1356.2 L1835.7 1351.3 L1846.0 1370.0 L1836.4 1365.2 L1834 1370 L1834 1395 L1828 1395 L1828 1370 L1825.6 1365.2 L1816.0 1370.0 L1826.3 1351.3 L1817.9 1356.2 L1827.0 1337.5 L1819.8 1342.3 L1827.6 1323.7 L1821.6 1328.5 L1828.3 1309.8 L1823.5 1314.7 L1829.0 1296.0 L1825.4 1300.8Z" fill="#264b57"/><path d="M1871 1288 L1877.4 1304.2 L1873.3 1298.5 L1879.5 1320.3 L1874.1 1314.7 L1881.6 1336.5 L1874.8 1330.8 L1883.8 1352.7 L1875.6 1347.0 L1885.9 1368.8 L1876.4 1363.2 L1888.0 1385.0 L1877.1 1379.3 L1874 1385 L1874 1410 L1868 1410 L1868 1385 L1864.9 1379.3 L1854.0 1385.0 L1865.6 1363.2 L1856.1 1368.8 L1866.4 1347.0 L1858.2 1352.7 L1867.2 1330.8 L1860.4 1336.5 L1867.9 1314.7 L1862.5 1320.3 L1868.7 1298.5 L1864.6 1304.2Z" fill="#264b57"/></g><text x="1930" y="786" text-anchor="middle" font-family="Liberation Serif" font-style="italic" font-size="64" fill="#264b57" stroke="#264b57" stroke-width="1.2" textLength="387" lengthAdjust="spacingAndGlyphs">San Francisco</text><text x="1933" y="894" text-anchor="middle" font-family="Liberation Sans" font-weight="700" font-size="100" fill="#264b57" stroke="#264b57" stroke-width="7" stroke-linejoin="round" letter-spacing="12" textLength="546" lengthAdjust="spacingAndGlyphs">BORCELLE</text><text x="1928" y="973" text-anchor="middle" font-family="Liberation Sans" font-weight="700" font-size="56" fill="#264b57" stroke="#264b57" stroke-width="4.5" stroke-linejoin="round" textLength="414" lengthAdjust="spacing">ADVENTURE</text><defs><path id="arc" d="M1547.5 973.5 A406 406 0 1 0 2305.5 973.5"/></defs><text font-family="Liberation Sans" font-weight="700" font-size="80" fill="#264b57" stroke="#264b57" stroke-width="7" stroke-linejoin="round"><textPath href="#arc" textLength="1573" lengthAdjust="spacing">EXPLORE MORE DISCOVER MORE</textPath></text></svg>
<div style="position:absolute;left:1340px;top:1765.5px;width:1172px;height:94.5px;border-radius:20px;box-sizing:border-box;border:2px solid #d5d7db;background:#f3f4f7;"></div>
<div style="position:absolute;left:1837.6px;top:1812.7px;line-height:0;white-space:pre;font-family:'Liberation Sans', sans-serif;font-size:34px;font-weight:400;font-style:normal;color:#0e1318;letter-spacing:0px;transform:scaleX(1.0230);transform-origin:left 0;-webkit-text-stroke:0.8px #0e1318;">+ Add page</div>
<svg style="position:absolute;left:1073px;top:1926px;" width="46" height="38" viewBox="0 0 46 38"><path d="M3 5H26M3 13H22M3 21H14M3 29H8" stroke="#0e1318" stroke-width="3" stroke-linecap="round"/><path d="M40 12L44 16L24 36L17 37L18 30Z" fill="none" stroke="#0e1318" stroke-width="3" stroke-linejoin="round"/></svg>
<div style="position:absolute;left:1135.6px;top:1945.5px;line-height:0;white-space:pre;font-family:'Liberation Sans', sans-serif;font-size:34px;font-weight:400;font-style:normal;color:#0e1318;letter-spacing:0px;transform:scaleX(1.0492);transform-origin:left 0;-webkit-text-stroke:0.6px #0e1318;">Notes</div>
<div style="position:absolute;left:2435.8px;top:1945.2px;line-height:0;white-space:pre;font-family:'Liberation Sans', sans-serif;font-size:34px;font-weight:400;font-style:normal;color:#0e1318;letter-spacing:0px;transform:scaleX(0.9547);transform-origin:left 0;-webkit-text-stroke:0.6px #0e1318;">Page 1 / 1</div>
<div style="position:absolute;left:2624px;top:1941.5px;width:274px;height:6.0px;background:#c3c6cc;border-radius:3px;"></div>
<div style="position:absolute;left:2898px;top:1941.5px;width:205px;height:6.0px;background:#dfe1e6;border-radius:3px;"></div>
<div style="position:absolute;left:2876px;top:1922.5px;width:45px;height:45px;border-radius:50%;background:#fff;box-shadow:0 1px 6px rgba(0,0,0,0.22);"></div>
<div style="position:absolute;left:3165.0px;top:1945.2px;line-height:0;white-space:pre;font-family:'Liberation Sans', sans-serif;font-size:34px;font-weight:400;font-style:normal;color:#0e1318;letter-spacing:0px;transform:scaleX(1.0255);transform-origin:left 0;-webkit-text-stroke:0.6px #0e1318;">98%</div>
<svg style="position:absolute;left:3312px;top:1923px;" width="46" height="44" viewBox="0 0 46 44"><rect x="2" y="2" width="42" height="26" rx="3" fill="none" stroke="#0e1318" stroke-width="3.2"/><rect x="2" y="33" width="12" height="9" rx="2" fill="none" stroke="#0e1318" stroke-width="3"/><rect x="17" y="33" width="12" height="9" rx="2" fill="none" stroke="#0e1318" stroke-width="3"/><rect x="32" y="33" width="12" height="9" rx="2" fill="none" stroke="#0e1318" stroke-width="3"/></svg>
<svg style="position:absolute;left:3410px;top:1924px;" width="42" height="42" viewBox="0 0 42 42"><rect x="2" y="2" width="15" height="15" rx="3" fill="none" stroke="#0e1318" stroke-width="3.2"/><rect x="24" y="2" width="15" height="15" rx="3" fill="none" stroke="#0e1318" stroke-width="3.2"/><rect x="2" y="24" width="15" height="15" rx="3" fill="none" stroke="#0e1318" stroke-width="3.2"/><rect x="24" y="24" width="15" height="15" rx="3" fill="none" stroke="#0e1318" stroke-width="3.2"/></svg>
<svg style="position:absolute;left:3506px;top:1924px;" width="42" height="42" viewBox="0 0 42 42"><path d="M25 3H39V17M39 3L25 17M17 39H3V25M3 39L17 25" fill="none" stroke="#0e1318" stroke-width="3.2"/></svg>
<svg style="position:absolute;left:3597px;top:1920px;" width="50" height="50" viewBox="0 0 50 50"><circle cx="25" cy="25" r="22.5" fill="none" stroke="#0e1318" stroke-width="3"/><path d="M18.5 19A6.5 6.5 0 1 1 27 25C25.5 26 25 27 25 29V31" fill="none" stroke="#0e1318" stroke-width="3.2"/><circle cx="25" cy="37" r="2.2" fill="#0e1318"/></svg>
<div style="position:absolute;left:211.5px;top:1070px;width:366px;height:366px;background:#fdfdf4;overflow:hidden;box-shadow:inset 0 0 0 1.5px rgba(0,0,0,0.08);"><svg width="366" height="366" viewBox="0 0 366 366"><defs><clipPath id="t1c"><circle cx="182.5" cy="185" r="120"/></clipPath></defs>
<circle cx="182.5" cy="185" r="120" fill="#fbf1d6"/>
<g clip-path="url(#t1c)">
<path d="M55 150 L66 141.5 L79 138.5 L116 135.5 L146 147.6 L158 144.5 L182 171.8 L200.6 165.8 L221.8 153.6 L249 138.5 L271.8 135.5 L294.6 138.5 L310 150 L310 230 L55 230Z" fill="#e5784a"/>
<path d="M55 184 L79.4 184 L100.6 164 L109.7 171.8 L123 161 L140 184 L158 199 L182 207 L55 207Z" fill="#264b57"/>
<path d="M310 150 L300.6 153.6 L279 171.8 L252 190 L218.8 207 L310 207Z" fill="#264b57"/>
<rect x="55" y="206" width="260" height="120" fill="#6ea99b"/>
<path d="M182 206.7 L231 206.7 Q240 214 237 220 L185.5 229.4 L255 238.5 L246 262.7 L216 275 L197.6 290 L182 300 Q150 290 140 281 L125 262.7 L131 244.5 L158 220Z" fill="#fdf3d6"/>
<path d="M55 220 L90 222 L120 250 L150 280 L186 305 L186 320 L55 320Z" fill="#264b57"/>
<path d="M85.5 216 L94 262 L77 262Z M119 232 L127 281 L111 281Z M140 250 L147 290 L133 290Z M154 252 L161 293 L147 293Z" fill="#264b57"/>
<path d="M120 180 Q130 175 140 190 M180 150 Q200 155 215 150 M240 145 Q255 142 270 146" stroke="#fdf3d6" stroke-width="1.5" fill="none"/>
</g>
<path d="M82 132 A112 112 0 0 1 284 132" fill="none" stroke="#264b57" stroke-width="2.5"/>
<path d="M124.5 136.4 A70.8 70.8 0 0 1 240 136.4" fill="none" stroke="#264b57" stroke-width="1.2"/>
<path d="M128 137 A67 67 0 0 1 237 137" fill="none" stroke="#264b57" stroke-width="1"/>
<defs><path id="ap1" d="M181.2 251.5 A77 77 0 1 1 183.8 251.5"/></defs><text font-family="Liberation Serif" font-weight="700" font-size="31" fill="#264b57" letter-spacing="0" text-anchor="middle" ><textPath href="#ap1" startOffset="50%" textLength="150" lengthAdjust="spacingAndGlyphs">BORCELLE</textPath></text>
<text x="183" y="127" text-anchor="middle" font-family="Liberation Serif" font-weight="700" font-size="9" fill="#264b57">OUTDOOR</text>
<text x="183" y="137" text-anchor="middle" font-family="Liberation Serif" font-weight="700" font-size="9" fill="#264b57">EQUIPMENT</text>
<circle cx="104" cy="129" r="3" fill="#264b57"/><circle cx="260.5" cy="129" r="3" fill="#264b57"/>
</svg></div>
<div style="position:absolute;left:597px;top:1070px;width:366px;height:366px;background:#eef2e1;overflow:hidden;box-shadow:inset 0 0 0 1.5px rgba(0,0,0,0.08);"><svg width="366" height="366" viewBox="0 0 366 366"><circle cx="183" cy="182" r="150" fill="#7ba23a"/>
<circle cx="183" cy="182" r="142" fill="#1e2f3c"/>
<circle cx="183" cy="182" r="89" fill="#7ba23a"/>
<circle cx="183" cy="182" r="82" fill="#f2efe6"/>
<defs><clipPath id="t2c"><circle cx="183" cy="182" r="82"/></clipPath></defs>
<g clip-path="url(#t2c)">
<rect x="100" y="95" width="170" height="175" fill="#e5784a"/>
<path d="M150 190 L175 150 L191 117 L205 135 L225 150 L262 184 L262 200 L150 200Z" fill="#1e2f3c"/>
<path d="M191 117 L200 140 L188 150 L196 165 L180 175 L186 150 Z M205 135 L222 160 L210 165 L230 178 L215 160Z M168 165 L175 150 L180 170Z" fill="#f4f2ee"/>
<path d="M118 118 Q130 100 150 110 Q175 105 172 125 Q180 140 165 150 Q150 158 158 175 L150 185 Q130 170 140 150 Q120 145 128 132 Q112 128 118 118Z" fill="#efede8"/>
<rect x="150" y="182" width="115" height="12" fill="#a9c86c"/>
<path d="M195 182 l4 -10 4 10z M210 182 l4 -11 4 11z M225 182 l4 -10 4 10z M240 182 l4 -9 4 9z" fill="#6da43a"/>
<rect x="100" y="196" width="170" height="80" fill="#74a83e"/>
<path d="M116 214 L150 190 L186 214 Z" fill="#c8403a"/>
<rect x="148" y="211" width="31" height="26" fill="#e07a3a"/>
<rect x="158" y="222" width="8" height="15" fill="#9a4a2a"/>
<path d="M169 255 Q200 245 215 232 Q235 218 256 214" stroke="#e5784a" stroke-width="8" fill="none"/>
</g>
<defs><path id="ap2" d="M181.2 284.0 A102 102 0 1 1 184.8 284.0"/></defs><text font-family="Liberation Sans" font-weight="700" font-size="19" fill="#f2efe6" letter-spacing="0" text-anchor="middle" ><textPath href="#ap2" startOffset="50%" >FIELD TO FORK FRESHNESS</textPath></text>
<defs><path id="ap3" d="M180.8 58.0 A124 124 0 1 0 185.2 58.0"/></defs><text font-family="Liberation Serif" font-weight="700" font-size="33" fill="#f2efe6" letter-spacing="0" text-anchor="middle" stroke="#f2efe6" stroke-width="1.5"><textPath href="#ap3" startOffset="50%" >BENJAMIN SHAH</textPath></text>
<text x="60" y="196" font-family="Liberation Sans" font-weight="700" font-size="11" fill="#f2efe6">ESTD</text>
<text x="278" y="196" font-family="Liberation Sans" font-weight="700" font-size="11" fill="#f2efe6">1885</text>
<path d="M70 166 l2.5 6 6.5 0 -5 4 2 6 -6 -4 -6 4 2 -6 -5 -4 6.5 0Z" fill="#f2efe6"/>
<path d="M294 166 l2.5 6 6.5 0 -5 4 2 6 -6 -4 -6 4 2 -6 -5 -4 6.5 0Z" fill="#f2efe6"/>
</svg></div>
<div style="position:absolute;left:211.5px;top:1455px;width:366px;height:366px;background:#f6f5f1;overflow:hidden;box-shadow:inset 0 0 0 1.5px rgba(0,0,0,0.08);"><svg width="366" height="366" viewBox="0 0 366 366"><path d="M56 155 A130 130 0 0 1 310 155" fill="none" stroke="#1e1e1e" stroke-width="3.5"/>
<path d="M70 218 A130 130 0 0 0 296 218" fill="none" stroke="#1e1e1e" stroke-width="3.5"/>
<path d="M72 155 A115 115 0 0 1 294 155" fill="none" stroke="#333" stroke-width="1.6"/>
<path d="M84 222 A115 115 0 0 0 282 222" fill="none" stroke="#333" stroke-width="1.6"/>
<path d="M118 202 L135 192 L144 194 L158 180 L176 150 L190 162 L205 178 L214 172 L222 166 L238 180 L252 196 Q190 198 118 206Z" fill="#2a2a2a"/><path d="M176 156 L184 175 L180 190 L192 172 Z M222 172 L228 185 L236 190Z" fill="#f6f5f1"/>
<path d="M112 214 Q175 196 255 200 Q235 214 190 212 Q150 210 112 214Z" fill="#2a2a2a"/>
<defs><path id="ap4" d="M181.4 273.0 A90 90 0 1 1 184.6 273.0"/></defs><text font-family="Liberation Serif" font-weight="400" font-size="22" fill="#222" letter-spacing="3" text-anchor="middle" ><textPath href="#ap4" startOffset="50%" >LARANA CAMPING</textPath></text>
<defs><path id="ap5" d="M181.5 95.0 A88 88 0 1 0 184.5 95.0"/></defs><text font-family="Liberation Serif" font-weight="400" font-size="13" fill="#222" letter-spacing="6" text-anchor="middle" ><textPath href="#ap5" startOffset="50%" >EXPLORE WITH US</textPath></text>
<text x="56" y="185" font-family="Liberation Serif" font-size="6" fill="#333">EST.</text>
<text x="300" y="185" font-family="Liberation Serif" font-size="6" fill="#333">1997</text>
</svg></div>
<div style="position:absolute;left:597px;top:1455px;width:366px;height:366px;background:#3b5a2e;overflow:hidden;"><svg width="366" height="366" viewBox="0 0 366 366"><circle cx="183.4" cy="183.8" r="145" fill="#eeeee2"/>
<circle cx="183.4" cy="183.8" r="136" fill="none" stroke="#3b5e2f" stroke-width="4"/>
<circle cx="183" cy="182" r="79" fill="none" stroke="#3b5e2f" stroke-width="5.5"/>
<ellipse cx="150" cy="130" rx="4.5" ry="2.6" transform="rotate(60 150 130)" fill="#8fc05a"/><ellipse cx="160" cy="118" rx="4.5" ry="2.6" transform="rotate(151 160 118)" fill="#8fc05a"/><ellipse cx="172" cy="112" rx="4.5" ry="2.6" transform="rotate(139 172 112)" fill="#8fc05a"/><ellipse cx="200" cy="112" rx="4.5" ry="2.6" transform="rotate(33 200 112)" fill="#8fc05a"/><ellipse cx="212" cy="120" rx="4.5" ry="2.6" transform="rotate(94 212 120)" fill="#8fc05a"/><ellipse cx="225" cy="130" rx="4.5" ry="2.6" transform="rotate(154 225 130)" fill="#8fc05a"/><ellipse cx="132" cy="150" rx="4.5" ry="2.6" transform="rotate(121 132 150)" fill="#8fc05a"/><ellipse cx="140" cy="162" rx="4.5" ry="2.6" transform="rotate(160 140 162)" fill="#8fc05a"/><ellipse cx="128" cy="175" rx="4.5" ry="2.6" transform="rotate(148 128 175)" fill="#8fc05a"/><ellipse cx="236" cy="150" rx="4.5" ry="2.6" transform="rotate(16 236 150)" fill="#8fc05a"/><ellipse cx="240" cy="168" rx="4.5" ry="2.6" transform="rotate(155 240 168)" fill="#8fc05a"/><ellipse cx="232" cy="185" rx="4.5" ry="2.6" transform="rotate(3 232 185)" fill="#8fc05a"/><ellipse cx="150" cy="178" rx="4.5" ry="2.6" transform="rotate(120 150 178)" fill="#8fc05a"/><ellipse cx="215" cy="172" rx="4.5" ry="2.6" transform="rotate(66 215 172)" fill="#8fc05a"/><ellipse cx="170" cy="140" rx="4.5" ry="2.6" transform="rotate(141 170 140)" fill="#8fc05a"/><ellipse cx="205" cy="145" rx="4.5" ry="2.6" transform="rotate(59 205 145)" fill="#8fc05a"/><ellipse cx="145" cy="145" rx="4.5" ry="2.6" transform="rotate(49 145 145)" fill="#8fc05a"/><ellipse cx="222" cy="145" rx="4.5" ry="2.6" transform="rotate(120 222 145)" fill="#8fc05a"/><ellipse cx="185" cy="128" rx="4.5" ry="2.6" transform="rotate(138 185 128)" fill="#8fc05a"/><ellipse cx="130" cy="190" rx="4.5" ry="2.6" transform="rotate(140 130 190)" fill="#8fc05a"/><ellipse cx="238" cy="195" rx="4.5" ry="2.6" transform="rotate(121 238 195)" fill="#8fc05a"/>
<path d="M178 218 L178 180 Q176 165 160 126 M180 178 Q182 150 178 122 M190 178 Q190 150 192 121 M192 180 Q205 160 215 137 M196 175 Q215 150 228 129 M178 185 Q150 170 124 162 M178 195 Q150 185 122 179 M194 185 Q220 170 239 164 M194 195 Q222 185 243 179 M170 140 Q160 135 150 122 M206 150 Q215 140 222 120" stroke="#3b5e2f" stroke-width="4" fill="none" stroke-linecap="round"/>
<path d="M176 216 L176 172 Q185 165 196 172 L196 216Z" fill="#3b5e2f"/>
<path d="M186 214 Q160 205 128 204 M186 214 Q160 215 130 213 M186 214 Q170 230 160 240 M186 214 Q186 235 185 246 M186 214 Q200 230 207 240 M186 214 Q215 215 243 213 M186 214 Q215 205 246 204 M186 214 Q150 220 140 232 M186 214 Q222 220 232 232 M186 214 Q175 225 150 228 M186 214 Q200 225 222 228" stroke="#3b5e2f" stroke-width="2.5" fill="none" stroke-linecap="round"/>
<path d="M70 130 L80 215 M296 130 L286 215" stroke="#3b5e2f" stroke-width="2"/>
<ellipse cx="67" cy="150" rx="8" ry="4.5" transform="rotate(-35 67 150)" fill="#2f5a2a"/><ellipse cx="83" cy="164" rx="8" ry="4.5" transform="rotate(35 83 164)" fill="#2f5a2a"/><ellipse cx="67" cy="178" rx="8" ry="4.5" transform="rotate(-35 67 178)" fill="#2f5a2a"/><ellipse cx="83" cy="192" rx="8" ry="4.5" transform="rotate(35 83 192)" fill="#2f5a2a"/><ellipse cx="67" cy="206" rx="8" ry="4.5" transform="rotate(-35 67 206)" fill="#2f5a2a"/><ellipse cx="83" cy="220" rx="8" ry="4.5" transform="rotate(35 83 220)" fill="#2f5a2a"/><ellipse cx="67" cy="234" rx="8" ry="4.5" transform="rotate(-35 67 234)" fill="#2f5a2a"/><ellipse cx="299" cy="150" rx="8" ry="4.5" transform="rotate(35 299 150)" fill="#2f5a2a"/><ellipse cx="283" cy="164" rx="8" ry="4.5" transform="rotate(-35 283 164)" fill="#2f5a2a"/><ellipse cx="299" cy="178" rx="8" ry="4.5" transform="rotate(35 299 178)" fill="#2f5a2a"/><ellipse cx="283" cy="192" rx="8" ry="4.5" transform="rotate(-35 283 192)" fill="#2f5a2a"/><ellipse cx="299" cy="206" rx="8" ry="4.5" transform="rotate(35 299 206)" fill="#2f5a2a"/><ellipse cx="283" cy="220" rx="8" ry="4.5" transform="rotate(-35 283 220)" fill="#2f5a2a"/><ellipse cx="299" cy="234" rx="8" ry="4.5" transform="rotate(35 299 234)" fill="#2f5a2a"/>
<defs><path id="ap6" d="M181.7 278.8 A95 95 0 1 1 185.1 278.8"/></defs><text font-family="Liberation Sans" font-weight="700" font-size="45" fill="#8ab83e" letter-spacing="4" text-anchor="middle" stroke="#8ab83e" stroke-width="2.5" stroke-linejoin="round"><textPath href="#ap6" startOffset="50%" >SALFORD</textPath></text>
<defs><path id="ap7" d="M181.2 59.8 A124 124 0 1 0 185.6 59.8"/></defs><text font-family="Liberation Sans" font-weight="700" font-size="35" fill="#8ab83e" letter-spacing="2.5" text-anchor="middle" stroke="#8ab83e" stroke-width="2" stroke-linejoin="round"><textPath href="#ap7" startOffset="50%" >NATURE LIFE</textPath></text>
</svg></div>
<div style="position:absolute;left:211.5px;top:1842px;width:366px;height:151px;overflow:hidden;background:#042326;"><svg width="366" height="366" viewBox="0 0 366 366"><circle cx="181.5" cy="183" r="147" fill="#fff"/>
<circle cx="181.5" cy="183" r="144" fill="#e8884a"/>
<circle cx="181.5" cy="183" r="101" fill="#fff"/>
<circle cx="181.5" cy="183" r="98" fill="#ecebe8"/>
<defs><path id="ap8" d="M179.6 293.0 A110 110 0 1 1 183.4 293.0"/></defs><text font-family="Liberation Sans" font-weight="700" font-size="31" fill="#fff" letter-spacing="0" text-anchor="middle" ><textPath href="#ap8" startOffset="50%" textLength="282" lengthAdjust="spacingAndGlyphs">BORCELLE ADVENTURE</textPath></text>
<text x="182" y="120" text-anchor="middle" font-family="Liberation Sans" font-weight="700" font-size="15" fill="#2a3640" textLength="58" lengthAdjust="spacingAndGlyphs">EST. 2024</text>
<path d="M120 150 Q140 140 150 150 L160 160 L110 160Z M210 150 Q230 138 245 150 L250 160 L205 160Z" fill="#c86a3a"/>
</svg></div>
<div style="position:absolute;left:597px;top:1842px;width:366px;height:151px;overflow:hidden;background:#fdf8de;box-shadow:inset 0 0 0 1.5px rgba(0,0,0,0.06);"><svg width="366" height="366" viewBox="0 0 366 366"><circle cx="186" cy="183" r="130" fill="none" stroke="#3d6b2a" stroke-width="5"/>
<circle cx="186" cy="183" r="124" fill="#f5e9d0"/>
<circle cx="186" cy="183" r="118" fill="none" stroke="#3d6b2a" stroke-width="1"/>
<circle cx="186" cy="183" r="92" fill="#3d6b2a"/>
<circle cx="186" cy="183" r="87" fill="#e2ecc8"/>
<path d="M148 185 Q140 130 160 100 Q172 140 166 185Z M195 185 Q210 125 190 95 Q176 140 180 185Z" fill="#e6a83e"/>
<path d="M130 140 Q150 120 160 110 M240 140 Q220 120 210 110" stroke="#6aa040" stroke-width="3" fill="none"/>
<defs><path id="ap9" d="M184.2 287.0 A104 104 0 1 1 187.8 287.0"/></defs><text font-family="Liberation Sans" font-weight="400" font-size="15" fill="#3d5a2a" letter-spacing="1" text-anchor="middle" ><textPath href="#ap9" startOffset="50%" >FIELD TO FORK FRESHNESS</textPath></text>
<path d="M82 140 l2 4.5 5 0 -4 3 1.5 4.5 -4.5 -3 -4.5 3 1.5 -4.5 -4 -3 5 0Z" fill="#3d5a2a"/>
<path d="M288 140 l2 4.5 5 0 -4 3 1.5 4.5 -4.5 -3 -4.5 3 1.5 -4.5 -4 -3 5 0Z" fill="#3d5a2a"/>
</svg></div>
<div style="position:absolute;left:0px;top:1993px;width:3680px;height:77px;background:#101010;"></div>
<svg style="position:absolute;left:30px;top:2016px;" width="32" height="32" viewBox="0 0 32 32"><path d="M0 4.5L13 2.7V15H0Z M15 2.4L32 0V15H15Z M0 17H13V29.3L0 27.5Z M15 17H32V32L15 29.6Z" fill="#fff"/></svg>
<svg style="position:absolute;left:121px;top:2014px;" width="44" height="38" viewBox="0 0 44 38"><path d="M2 6H16L20 10H42V34H2Z" fill="#f0c23a"/><path d="M2 14H42V34H2Z" fill="#fbd865"/><rect x="14" y="24" width="16" height="12" fill="#2b7bd8"/></svg>
<svg style="position:absolute;left:214px;top:2007px;" width="48" height="48" viewBox="0 0 48 48"><path d="M24 24 L3.22 12.00 A24 24 0 0 1 44.78 12.00 Z" fill="#db4437"/><path d="M24 24 L44.78 12.00 A24 24 0 0 1 24.00 48.00 Z" fill="#f4c20d"/><path d="M24 24 L24.00 48.00 A24 24 0 0 1 3.22 12.00 Z" fill="#0f9d58"/><circle cx="24" cy="24" r="11.040000000000001" fill="#fff"/><circle cx="24" cy="24" r="8.64" fill="#4285f4"/></svg>
<div style="position:absolute;left:248px;top:2036px;width:22px;height:22px;border-radius:50%;background:#f3d28a;border:2px solid #fff;"></div>
<svg style="position:absolute;left:307px;top:2007px;" width="48" height="48" viewBox="0 0 48 48"><circle cx="24" cy="24" r="23" fill="#3a3f4a"/><circle cx="24" cy="24" r="15" fill="none" stroke="#e04848" stroke-width="6"/></svg>
<div style="position:absolute;left:379.5px;top:1993px;width:85.0px;height:77px;background:#2b2b2b;"></div>
<svg style="position:absolute;left:401px;top:2006px;" width="50" height="50" viewBox="0 0 50 50"><path d="M25 25 L3.35 12.50 A25 25 0 0 1 46.65 12.50 Z" fill="#db4437"/><path d="M25 25 L46.65 12.50 A25 25 0 0 1 25.00 50.00 Z" fill="#f4c20d"/><path d="M25 25 L25.00 50.00 A25 25 0 0 1 3.35 12.50 Z" fill="#0f9d58"/><circle cx="25" cy="25" r="11.5" fill="#fff"/><circle cx="25" cy="25" r="9.0" fill="#4285f4"/></svg>
<div style="position:absolute;left:426px;top:2028px;width:26px;height:26px;border-radius:50%;background:#e3e8ee;"></div>
<svg style="position:absolute;left:496px;top:2007px;" width="48" height="48" viewBox="0 0 48 48"><circle cx="24" cy="24" r="23" fill="#2b2b2b" stroke="#bbb" stroke-width="2"/><circle cx="24" cy="14" r="7" fill="#ddd"/><circle cx="15" cy="30" r="7" fill="#ddd"/><circle cx="33" cy="30" r="7" fill="#ddd"/></svg>
<div style="position:absolute;left:520px;top:2030px;width:24px;height:24px;border-radius:50%;background:#f00;"></div>
<div style="position:absolute;left:105.8px;top:2065px;width:76.7px;height:5px;background:#76b9ed;"></div>
<div style="position:absolute;left:199px;top:2065px;width:76.69999999999999px;height:5px;background:#76b9ed;"></div>
<div style="position:absolute;left:293.5px;top:2065px;width:75.89999999999998px;height:5px;background:#76b9ed;"></div>
<div style="position:absolute;left:379.5px;top:2065px;width:85.0px;height:5px;background:#76b9ed;"></div>
<div style="position:absolute;left:480.4px;top:2065px;width:76.60000000000002px;height:5px;background:#76b9ed;"></div>
<div style="position:absolute;left:2960.5px;top:2020.7px;line-height:0;white-space:pre;font-family:'Liberation Sans', sans-serif;font-size:21px;font-weight:400;font-style:normal;color:#fff;letter-spacing:0px;transform:scaleX(0.9524);transform-origin:left 0;">U:</div>
<div style="position:absolute;left:2960.5px;top:2045.7px;line-height:0;white-space:pre;font-family:'Liberation Sans', sans-serif;font-size:21px;font-weight:400;font-style:normal;color:#fff;letter-spacing:0px;transform:scaleX(0.9524);transform-origin:left 0;">D:</div>
<div style="position:absolute;left:3037.0px;top:2020.7px;line-height:0;white-space:pre;font-family:'Liberation Sans', sans-serif;font-size:21px;font-weight:400;font-style:normal;color:#fff;letter-spacing:0px;transform:scaleX(0.9887);transform-origin:left 0;">0 kB/s</div>
<div style="position:absolute;left:3037.0px;top:2045.7px;line-height:0;white-space:pre;font-family:'Liberation Sans', sans-serif;font-size:21px;font-weight:400;font-style:normal;color:#fff;letter-spacing:0px;transform:scaleX(0.9887);transform-origin:left 0;">0 kB/s</div>
<svg style="position:absolute;left:3110px;top:2022px;" width="26" height="16" viewBox="0 0 26 16"><path d="M2 14L13 3L24 14" fill="none" stroke="#fff" stroke-width="2.6"/></svg>
<svg style="position:absolute;left:3156px;top:2012px;" width="24" height="38" viewBox="0 0 24 38"><rect x="6" y="2" width="12" height="22" rx="6" fill="#fff"/><path d="M2 18A10 10 0 0 0 22 18M12 28V34M6 34H18" fill="none" stroke="#fff" stroke-width="2.4"/></svg>
<svg style="position:absolute;left:3199px;top:2016px;" width="31" height="31" viewBox="0 0 31 31"><circle cx="15.5" cy="15.5" r="14" fill="#1e4f7a"/><path d="M15.5 6A9.5 9.5 0 1 1 6 15.5" fill="none" stroke="#3fb3e8" stroke-width="5"/></svg>
<svg style="position:absolute;left:3245px;top:2014px;" width="30" height="34" viewBox="0 0 30 34"><rect x="1" y="1" width="28" height="32" fill="#19a34a"/><rect x="6" y="6" width="18" height="12" fill="#111"/><rect x="8" y="22" width="4" height="10" fill="#fff"/><rect x="17" y="22" width="4" height="10" fill="#fff"/></svg>
<svg style="position:absolute;left:3293px;top:2014px;" width="30" height="32" viewBox="0 0 30 32"><path d="M3 30A26 26 0 0 1 28 5M9 30A20 20 0 0 1 28 11M15 30A14 14 0 0 1 28 17M21 30A8 8 0 0 1 28 23" fill="none" stroke="#ddd" stroke-width="2.2"/><circle cx="26" cy="28" r="3" fill="#fff"/></svg>
<svg style="position:absolute;left:3333px;top:2014px;" width="36" height="34" viewBox="0 0 36 34"><path d="M2 12H8L16 4V30L8 22H2Z" fill="none" stroke="#fff" stroke-width="2.4" stroke-linejoin="round"/><path d="M21 11Q25 17 21 23M26 7Q32 17 26 27M31 3Q39 17 31 31" fill="none" stroke="#ddd" stroke-width="2.2"/></svg>
<div style="position:absolute;left:3386.3px;top:2032.4px;line-height:0;white-space:pre;font-family:'Liberation Sans', sans-serif;font-size:22px;font-weight:400;font-style:normal;color:#fff;letter-spacing:0px;transform:scaleX(0.9374);transform-origin:left 0;">ENG</div>
<div style="position:absolute;left:3484.0px;top:2014.3px;line-height:0;white-space:pre;font-family:'Liberation Sans', sans-serif;font-size:21px;font-weight:400;font-style:normal;color:#fff;letter-spacing:0px;transform:scaleX(0.9779);transform-origin:left 0;">09:33</div>
<div style="position:absolute;left:3454.4px;top:2049.1px;line-height:0;white-space:pre;font-family:'Liberation Sans', sans-serif;font-size:21px;font-weight:400;font-style:normal;color:#fff;letter-spacing:0px;transform:scaleX(1.0684);transform-origin:left 0;">07/12/2024</div>
<svg style="position:absolute;left:3601px;top:2016px;" width="32" height="32" viewBox="0 0 32 32"><path d="M1 1H31V23H20L16 29L12 23H1Z" fill="#fff"/><path d="M7 8H25M7 13H25M7 18H19" stroke="#101010" stroke-width="2"/></svg>
<div style="position:absolute;left:3057px;top:153px;width:620px;height:1420px;background:#fff;border-radius:22px;box-shadow:0 4px 18px rgba(0,0,0,0.22), 0 1px 4px rgba(0,0,0,0.10);"></div>
<div style="position:absolute;left:3165.5px;top:204.4px;line-height:0;white-space:pre;font-family:'Liberation Sans', sans-serif;font-size:22px;font-weight:400;font-style:normal;color:#3a3a3a;letter-spacing:0px;transform:scaleX(1.0407);transform-origin:left 0;">New tab</div>
<div style="position:absolute;right:42.0px;top:204.4px;line-height:0;white-space:pre;font-family:'Liberation Sans', sans-serif;font-size:22px;font-weight:400;font-style:normal;color:#3a3a3a;letter-spacing:0px;transform:scaleX(1.0248);transform-origin:right 0;">Ctrl+T</div>
<div style="position:absolute;left:3165.5px;top:258.1px;line-height:0;white-space:pre;font-family:'Liberation Sans', sans-serif;font-size:22px;font-weight:400;font-style:normal;color:#3a3a3a;letter-spacing:0px;transform:scaleX(1.0462);transform-origin:left 0;">New window</div>
<div style="position:absolute;right:42.0px;top:258.1px;line-height:0;white-space:pre;font-family:'Liberation Sans', sans-serif;font-size:22px;font-weight:400;font-style:normal;color:#3a3a3a;letter-spacing:0px;transform:scaleX(1.0452);transform-origin:right 0;">Ctrl+N</div>
<div style="position:absolute;left:3165.5px;top:312.0px;line-height:0;white-space:pre;font-family:'Liberation Sans', sans-serif;font-size:22px;font-weight:400;font-style:normal;color:#3a3a3a;letter-spacing:0px;transform:scaleX(1.0667);transform-origin:left 0;">New Incognito window</div>
<div style="position:absolute;right:42.0px;top:312.0px;line-height:0;white-space:pre;font-family:'Liberation Sans', sans-serif;font-size:22px;font-weight:400;font-style:normal;color:#3a3a3a;letter-spacing:0px;transform:scaleX(1.0765);transform-origin:right 0;">Ctrl+Shift+N</div>
<div style="position:absolute;left:3165.5px;top:482.4px;line-height:0;white-space:pre;font-family:'Liberation Sans', sans-serif;font-size:22px;font-weight:400;font-style:normal;color:#3a3a3a;letter-spacing:0px;transform:scaleX(1.0158);transform-origin:left 0;">Passwords and autofill</div>
<svg style="position:absolute;left:3621px;top:472px;" width="12" height="19" viewBox="0 0 12 19"><path d="M1.5 1.5L9.5 9.5L1.5 17.5" fill="none" stroke="#3a3a3a" stroke-width="2.2"/></svg>
<div style="position:absolute;left:3165.5px;top:536.4px;line-height:0;white-space:pre;font-family:'Liberation Sans', sans-serif;font-size:22px;font-weight:400;font-style:normal;color:#3a3a3a;letter-spacing:0px;transform:scaleX(1.0343);transform-origin:left 0;">History</div>
<svg style="position:absolute;left:3621px;top:526px;" width="12" height="19" viewBox="0 0 12 19"><path d="M1.5 1.5L9.5 9.5L1.5 17.5" fill="none" stroke="#3a3a3a" stroke-width="2.2"/></svg>
<div style="position:absolute;left:3165.5px;top:589.4px;line-height:0;white-space:pre;font-family:'Liberation Sans', sans-serif;font-size:22px;font-weight:400;font-style:normal;color:#3a3a3a;letter-spacing:0px;transform:scaleX(1.0272);transform-origin:left 0;">Downloads</div>
<div style="position:absolute;right:42.0px;top:589.4px;line-height:0;white-space:pre;font-family:'Liberation Sans', sans-serif;font-size:22px;font-weight:400;font-style:normal;color:#3a3a3a;letter-spacing:0px;transform:scaleX(0.9817);transform-origin:right 0;">Ctrl+J</div>
<div style="position:absolute;left:3165.5px;top:643.0px;line-height:0;white-space:pre;font-family:'Liberation Sans', sans-serif;font-size:22px;font-weight:400;font-style:normal;color:#3a3a3a;letter-spacing:0px;transform:scaleX(1.0160);transform-origin:left 0;">Bookmarks and lists</div>
<svg style="position:absolute;left:3621px;top:632.6px;" width="12" height="19" viewBox="0 0 12 19"><path d="M1.5 1.5L9.5 9.5L1.5 17.5" fill="none" stroke="#3a3a3a" stroke-width="2.2"/></svg>
<div style="position:absolute;left:3165.5px;top:697.4px;line-height:0;white-space:pre;font-family:'Liberation Sans', sans-serif;font-size:22px;font-weight:400;font-style:normal;color:#3a3a3a;letter-spacing:0px;transform:scaleX(1.0160);transform-origin:left 0;">Tab groups</div>
<svg style="position:absolute;left:3621px;top:687px;" width="12" height="19" viewBox="0 0 12 19"><path d="M1.5 1.5L9.5 9.5L1.5 17.5" fill="none" stroke="#3a3a3a" stroke-width="2.2"/></svg>
<div style="position:absolute;left:3165.5px;top:751.2px;line-height:0;white-space:pre;font-family:'Liberation Sans', sans-serif;font-size:22px;font-weight:400;font-style:normal;color:#3a3a3a;letter-spacing:0px;transform:scaleX(0.9756);transform-origin:left 0;">Extensions</div>
<svg style="position:absolute;left:3621px;top:740.8px;" width="12" height="19" viewBox="0 0 12 19"><path d="M1.5 1.5L9.5 9.5L1.5 17.5" fill="none" stroke="#3a3a3a" stroke-width="2.2"/></svg>
<div style="position:absolute;left:3165.5px;top:803.8px;line-height:0;white-space:pre;font-family:'Liberation Sans', sans-serif;font-size:22px;font-weight:400;font-style:normal;color:#3a3a3a;letter-spacing:0px;transform:scaleX(1.0292);transform-origin:left 0;">Delete browsing data...</div>
<div style="position:absolute;right:42.0px;top:803.8px;line-height:0;white-space:pre;font-family:'Liberation Sans', sans-serif;font-size:22px;font-weight:400;font-style:normal;color:#3a3a3a;letter-spacing:0px;transform:scaleX(1.0661);transform-origin:right 0;">Ctrl+Shift+Del</div>
<div style="position:absolute;left:3165.5px;top:890.8px;line-height:0;white-space:pre;font-family:'Liberation Sans', sans-serif;font-size:22px;font-weight:400;font-style:normal;color:#3a3a3a;letter-spacing:0px;transform:scaleX(1.0240);transform-origin:left 0;">Zoom</div>
<div style="position:absolute;left:3165.5px;top:977.1px;line-height:0;white-space:pre;font-family:'Liberation Sans', sans-serif;font-size:22px;font-weight:400;font-style:normal;color:#3a3a3a;letter-spacing:0px;transform:scaleX(0.9846);transform-origin:left 0;">Print...</div>
<div style="position:absolute;right:42.0px;top:977.1px;line-height:0;white-space:pre;font-family:'Liberation Sans', sans-serif;font-size:22px;font-weight:400;font-style:normal;color:#3a3a3a;letter-spacing:0px;transform:scaleX(1.0267);transform-origin:right 0;">Ctrl+P</div>
<div style="position:absolute;left:3165.5px;top:1030.4px;line-height:0;white-space:pre;font-family:'Liberation Sans', sans-serif;font-size:22px;font-weight:400;font-style:normal;color:#3a3a3a;letter-spacing:0px;transform:scaleX(1.0048);transform-origin:left 0;">Search with Google Lens</div>
<div style="position:absolute;left:3165.5px;top:1084.0px;line-height:0;white-space:pre;font-family:'Liberation Sans', sans-serif;font-size:22px;font-weight:400;font-style:normal;color:#3a3a3a;letter-spacing:0px;transform:scaleX(0.9612);transform-origin:left 0;">Translate...</div>
<div style="position:absolute;left:3165.5px;top:1137.4px;line-height:0;white-space:pre;font-family:'Liberation Sans', sans-serif;font-size:22px;font-weight:400;font-style:normal;color:#3a3a3a;letter-spacing:0px;transform:scaleX(1.0456);transform-origin:left 0;">Find and edit</div>
<svg style="position:absolute;left:3621px;top:1127px;" width="12" height="19" viewBox="0 0 12 19"><path d="M1.5 1.5L9.5 9.5L1.5 17.5" fill="none" stroke="#3a3a3a" stroke-width="2.2"/></svg>
<div style="position:absolute;left:3165.5px;top:1191.4px;line-height:0;white-space:pre;font-family:'Liberation Sans', sans-serif;font-size:22px;font-weight:400;font-style:normal;color:#3a3a3a;letter-spacing:0px;transform:scaleX(0.9719);transform-origin:left 0;">Cast, save, and share</div>
<svg style="position:absolute;left:3621px;top:1181px;" width="12" height="19" viewBox="0 0 12 19"><path d="M1.5 1.5L9.5 9.5L1.5 17.5" fill="none" stroke="#3a3a3a" stroke-width="2.2"/></svg>
<div style="position:absolute;left:3165.5px;top:1244.2px;line-height:0;white-space:pre;font-family:'Liberation Sans', sans-serif;font-size:22px;font-weight:400;font-style:normal;color:#3a3a3a;letter-spacing:0px;transform:scaleX(1.0573);transform-origin:left 0;">More tools</div>
<svg style="position:absolute;left:3621px;top:1233.8px;" width="12" height="19" viewBox="0 0 12 19"><path d="M1.5 1.5L9.5 9.5L1.5 17.5" fill="none" stroke="#3a3a3a" stroke-width="2.2"/></svg>
<div style="position:absolute;left:3165.5px;top:1331.8px;line-height:0;white-space:pre;font-family:'Liberation Sans', sans-serif;font-size:22px;font-weight:400;font-style:normal;color:#3a3a3a;letter-spacing:0px;transform:scaleX(1.0166);transform-origin:left 0;">Help</div>
<svg style="position:absolute;left:3621px;top:1321.4px;" width="12" height="19" viewBox="0 0 12 19"><path d="M1.5 1.5L9.5 9.5L1.5 17.5" fill="none" stroke="#3a3a3a" stroke-width="2.2"/></svg>
<div style="position:absolute;left:3165.5px;top:1385.7px;line-height:0;white-space:pre;font-family:'Liberation Sans', sans-serif;font-size:22px;font-weight:400;font-style:normal;color:#3a3a3a;letter-spacing:0px;transform:scaleX(1.0063);transform-origin:left 0;">Settings</div>
<div style="position:absolute;left:3165.5px;top:1439.1px;line-height:0;white-space:pre;font-family:'Liberation Sans', sans-serif;font-size:22px;font-weight:400;font-style:normal;color:#3a3a3a;letter-spacing:0px;transform:scaleX(0.9267);transform-origin:left 0;">Exit</div>
<div style="position:absolute;left:3165.5px;top:1526.1px;line-height:0;white-space:pre;font-family:'Liberation Sans', sans-serif;font-size:22px;font-weight:400;font-style:normal;color:#3a3a3a;letter-spacing:0px;transform:scaleX(1.0508);transform-origin:left 0;">Managed by your organization</div>
<div style="position:absolute;left:3057px;top:351.5px;width:623px;height:2.0px;background:#e1e6ee;"></div>
<div style="position:absolute;left:3057px;top:844.5px;width:623px;height:2.0px;background:#e1e6ee;"></div>
<div style="position:absolute;left:3057px;top:931px;width:623px;height:2px;background:#e1e6ee;"></div>
<div style="position:absolute;left:3057px;top:1285.5px;width:623px;height:2.0px;background:#e1e6ee;"></div>
<div style="position:absolute;left:3057px;top:1479px;width:623px;height:2px;background:#e1e6ee;"></div>
<div style="position:absolute;left:3081px;top:370px;width:575px;height:77px;border-radius:26px;background:#eef2fa;"></div>
<div style="position:absolute;left:3165.5px;top:409.9px;line-height:0;white-space:pre;font-family:'Liberation Sans', sans-serif;font-size:22px;font-weight:400;font-style:normal;color:#3a3a3a;letter-spacing:0px;transform:scaleX(1.0066);transform-origin:left 0;">John (Demo)</div>
<div style="position:absolute;left:3462px;top:381px;width:117px;height:53px;border-radius:26px;background:#d3e3fd;"></div>
<div style="position:absolute;left:3473.5px;top:409.9px;line-height:0;white-space:pre;font-family:'Liberation Sans', sans-serif;font-size:22px;font-weight:400;font-style:normal;color:#3a3a3a;letter-spacing:0px;transform:scaleX(1.0158);transform-origin:left 0;">Signed in</div>
<svg style="position:absolute;left:3621px;top:399.5px;" width="12" height="19" viewBox="0 0 12 19"><path d="M1.5 1.5L9.5 9.5L1.5 17.5" fill="none" stroke="#3a3a3a" stroke-width="2.2"/></svg>
<div style="position:absolute;left:3352px;top:862.7px;width:54px;height:54px;border-radius:50%;background:#f1f1f1;"></div>
<div style="position:absolute;left:3505px;top:862.7px;width:54px;height:54px;border-radius:50%;background:#f1f1f1;"></div>
<div style="position:absolute;left:3600.5px;top:862.7px;width:54px;height:54px;border-radius:50%;background:#f1f1f1;"></div>
<div style="position:absolute;left:3368px;top:888px;width:23px;height:3px;background:#3a3a3a;"></div>
<svg style="position:absolute;left:3520px;top:878px;" width="24" height="24" viewBox="0 0 24 24"><path d="M12 1V23M1 12H23" stroke="#3a3a3a" stroke-width="2.8"/></svg>
<svg style="position:absolute;left:3614px;top:877px;" width="28" height="26" viewBox="0 0 28 26"><path d="M2 8V2H8M20 2H26V8M26 18V24H20M8 24H2V18" fill="none" stroke="#3a3a3a" stroke-width="2.8"/></svg>
<div style="position:absolute;left:3429.0px;top:890.8px;line-height:0;white-space:pre;font-family:'Liberation Sans', sans-serif;font-size:22px;font-weight:400;font-style:normal;color:#3a3a3a;letter-spacing:0px;transform:scaleX(0.9417);transform-origin:left 0;">125%</div>
<div style="position:absolute;left:3577px;top:864px;width:2px;height:51px;background:#e1e6ee;"></div>
<svg style="position:absolute;left:3105px;top:190px;" width="26" height="26" viewBox="0 0 26 26"><rect x="1.5" y="4" width="23" height="17" rx="2.5" fill="none" stroke="#474747" stroke-width="2.8"/><rect x="14" y="4" width="10.5" height="6.5" fill="#474747"/></svg>
<svg style="position:absolute;left:3105px;top:243.7px;" width="26" height="26" viewBox="0 0 26 26"><path d="M13 3H5A3 3 0 0 0 2 6V21A3 3 0 0 0 5 24H20A3 3 0 0 0 23 21V13" fill="none" stroke="#474747" stroke-width="2.8"/><path d="M19 1V11M14 6H24" stroke="#474747" stroke-width="2.4"/></svg>
<svg style="position:absolute;left:3105px;top:297.6px;" width="26" height="26" viewBox="0 0 26 26"><path d="M6 11L8 3H18L20 11" fill="#474747"/><path d="M1 12H25" stroke="#474747" stroke-width="2.6"/><circle cx="7" cy="19" r="3.6" fill="none" stroke="#474747" stroke-width="2.8"/><circle cx="19" cy="19" r="3.6" fill="none" stroke="#474747" stroke-width="2.8"/><path d="M10.5 19H15.5" stroke="#474747" stroke-width="2.4"/></svg>
<svg style="position:absolute;left:3105px;top:468px;" width="26" height="26" viewBox="0 0 26 26"><circle cx="7" cy="13" r="5.5" fill="none" stroke="#474747" stroke-width="2.8"/><circle cx="7" cy="13" r="2" fill="#474747"/><path d="M12.5 13H25V18H20V15" fill="none" stroke="#474747" stroke-width="2.8"/></svg>
<svg style="position:absolute;left:3105px;top:522px;" width="26" height="26" viewBox="0 0 26 26"><path d="M5 8A10 10 0 1 1 3 14" fill="none" stroke="#474747" stroke-width="2.8"/><path d="M1 3V9H7" fill="none" stroke="#474747" stroke-width="2.8"/><path d="M13 8V14L17 17" fill="none" stroke="#474747" stroke-width="2.8"/></svg>
<svg style="position:absolute;left:3105px;top:575px;" width="26" height="26" viewBox="0 0 26 26"><path d="M13 2V17M7 11L13 17L19 11" fill="none" stroke="#474747" stroke-width="2.8"/><path d="M3 18V23H23V18" fill="none" stroke="#474747" stroke-width="2.8"/></svg>
<svg style="position:absolute;left:3105px;top:628.6px;" width="26" height="26" viewBox="0 0 26 26"><path d="M13 2L16.2 9.2L24 10L18.2 15.2L19.9 23L13 19L6.1 23L7.8 15.2L2 10L9.8 9.2Z" fill="none" stroke="#474747" stroke-width="2.8" stroke-linejoin="round"/></svg>
<svg style="position:absolute;left:3105px;top:683px;" width="26" height="26" viewBox="0 0 26 26"><rect x="2" y="2" width="9" height="9" fill="none" stroke="#474747" stroke-width="2.8"/><rect x="15" y="2" width="9" height="9" fill="none" stroke="#474747" stroke-width="2.8"/><rect x="2" y="15" width="9" height="9" fill="none" stroke="#474747" stroke-width="2.8"/><rect x="15" y="15" width="9" height="9" fill="none" stroke="#474747" stroke-width="2.8"/></svg>
<svg style="position:absolute;left:3105px;top:736.8px;" width="26" height="26" viewBox="0 0 26 26"><path d="M3 7H9V5A3 3 0 0 1 15 5V7H21V11A3 3 0 0 1 21 17V23H3V17" fill="none" stroke="#474747" stroke-width="2.8" stroke-linejoin="round"/><path d="M3 17V7" fill="none" stroke="#474747" stroke-width="2.8"/></svg>
<svg style="position:absolute;left:3105px;top:789.4px;" width="26" height="26" viewBox="0 0 26 26"><path d="M3 5H23M9 5V2H17V5M5 5L6 24H20L21 5" fill="none" stroke="#474747" stroke-width="2.8"/><rect x="9" y="9" width="8" height="11" fill="#474747"/></svg>
<svg style="position:absolute;left:3105px;top:876.4px;" width="26" height="26" viewBox="0 0 26 26"><circle cx="10" cy="10" r="7.5" fill="none" stroke="#474747" stroke-width="2.8"/><path d="M15.5 15.5L24 24" fill="none" stroke="#474747" stroke-width="2.8"/><path d="M10 6V14M6 10H14" stroke="#474747" stroke-width="2.4"/></svg>
<svg style="position:absolute;left:3105px;top:962.7px;" width="26" height="26" viewBox="0 0 26 26"><path d="M6 8V2H20V8M6 19H2V9H24V19H20" fill="none" stroke="#474747" stroke-width="2.8"/><rect x="6" y="15" width="14" height="9" fill="none" stroke="#474747" stroke-width="2.8"/></svg>
<svg style="position:absolute;left:3105px;top:1016px;" width="26" height="26" viewBox="0 0 26 26"><path d="M3 9V7A4 4 0 0 1 7 3H9M17 3H19A4 4 0 0 1 23 7V9M3 17V19A4 4 0 0 0 7 23H9M17 23" fill="none" stroke="#474747" stroke-width="2.8"/><circle cx="13" cy="13" r="3.8" fill="#474747"/><circle cx="21" cy="21" r="2.2" fill="#474747"/></svg>
<svg style="position:absolute;left:3105px;top:1069.6px;" width="26" height="26" viewBox="0 0 26 26"><rect x="1" y="1" width="15" height="16" fill="#474747"/><text x="8.5" y="13.5" text-anchor="middle" font-size="11" font-family="Liberation Sans" font-weight="700" fill="#fff">G</text><rect x="10" y="9" width="15" height="16" fill="#fff" fill="none" stroke="#474747" stroke-width="2.8"/><text x="17.5" y="21.5" text-anchor="middle" font-size="10" font-family="Liberation Sans" fill="#474747">文</text></svg>
<svg style="position:absolute;left:3105px;top:1123px;" width="26" height="26" viewBox="0 0 26 26"><path d="M16 2H4V24H20V6Z" fill="none" stroke="#474747" stroke-width="2.8" stroke-linejoin="round"/><circle cx="12" cy="13" r="4" fill="none" stroke="#474747" stroke-width="2.8"/><path d="M15 16L18 19" fill="none" stroke="#474747" stroke-width="2.8"/></svg>
<svg style="position:absolute;left:3105px;top:1177px;" width="26" height="26" viewBox="0 0 26 26"><path d="M15 2H4V23H11M15 2L20 7V12" fill="none" stroke="#474747" stroke-width="2.8" stroke-linejoin="round"/><path d="M19 14V22M15 18L19 22L23 18M15 25H23" stroke="#474747" stroke-width="2.4" fill="none"/></svg>
<svg style="position:absolute;left:3105px;top:1229.8px;" width="26" height="26" viewBox="0 0 26 26"><path d="M9 6V2H17V6" fill="none" stroke="#474747" stroke-width="2.8"/><rect x="2" y="6" width="22" height="17" rx="2" fill="none" stroke="#474747" stroke-width="2.8"/><path d="M2 13H24" fill="none" stroke="#474747" stroke-width="2.8"/><rect x="7" y="11" width="3" height="5" fill="#474747"/><rect x="16" y="11" width="3" height="5" fill="#474747"/></svg>
<svg style="position:absolute;left:3105px;top:1317.4px;" width="26" height="26" viewBox="0 0 26 26"><circle cx="13" cy="13" r="11" fill="none" stroke="#474747" stroke-width="2.8"/><path d="M9.5 10A3.5 3.5 0 1 1 14 13C13 13.6 13 14.5 13 15.5" fill="none" stroke="#474747" stroke-width="2.8"/><circle cx="13" cy="19.5" r="1.7" fill="#474747"/></svg>
<svg style="position:absolute;left:3105px;top:1371.3px;" width="26" height="26" viewBox="0 0 26 26"><path d="M11 1H15L16 5L19.5 3L22.5 6L20.5 9.5L25 10.5V14.5L20.5 15.5L22.5 19.5L19.5 22.5L16 20.5L15 25H11L10 20.5L6.5 22.5L3.5 19.5L5.5 15.5L1 14.5V10.5L5.5 9.5L3.5 6L6.5 3L10 5Z" fill="#474747"/><circle cx="13" cy="13" r="4.5" fill="#fff"/><circle cx="13" cy="13" r="2.8" fill="#474747"/></svg>
<svg style="position:absolute;left:3105px;top:1424.7px;" width="26" height="26" viewBox="0 0 26 26"><path d="M9 8V3H23V23H9V18" fill="none" stroke="#474747" stroke-width="2.8"/><path d="M2 13H16M11 8L16 13L11 18" fill="none" stroke="#474747" stroke-width="2.8"/><path d="M3 4V22" stroke="none"/></svg>
<svg style="position:absolute;left:3105px;top:1511.7px;" width="26" height="26" viewBox="0 0 26 26"><rect x="2" y="2" width="14" height="22" fill="#474747"/><rect x="16" y="9" width="9" height="15" fill="none" stroke="#474747" stroke-width="2.8"/><path d="M6 6V20M11 6V20M4 11H14M4 16H14" stroke="#fff" stroke-width="1.6"/></svg>
<svg style="position:absolute;left:930px;top:572px;" width="30" height="42" viewBox="0 0 30 42"><path d="M4.2 3.3 L4.2 34.3 L12 28 L18.6 38 L21.6 35 L18 26.8 L25.8 25.4 Z" fill="#fff" stroke="#555" stroke-width="1.6" stroke-linejoin="round"/></svg>
<div style="position:absolute;left:3670px;top:1993px;width:2px;height:77px;background:#8a8a8a;"></div>
<svg style="position:absolute;left:0px;top:0px;" width="20" height="20" viewBox="0 0 20 20"><path d="M0 0H20A20 20 0 0 0 0 20Z" fill="#fff"/></svg>
<svg style="position:absolute;left:3650px;top:0px;" width="30" height="30" viewBox="0 0 30 30"><path d="M30 0H0A30 30 0 0 1 30 30Z" fill="#fff"/></svg>
<svg style="position:absolute;left:0px;top:2046px;" width="24" height="24" viewBox="0 0 24 24"><path d="M0 24V0A24 24 0 0 0 24 24Z" fill="#fff"/></svg>
<svg style="position:absolute;left:3652px;top:2042px;" width="28" height="28" viewBox="0 0 28 28"><path d="M28 28V0A28 28 0 0 1 0 28Z" fill="#f0f0f0"/></svg>
</body></html>
